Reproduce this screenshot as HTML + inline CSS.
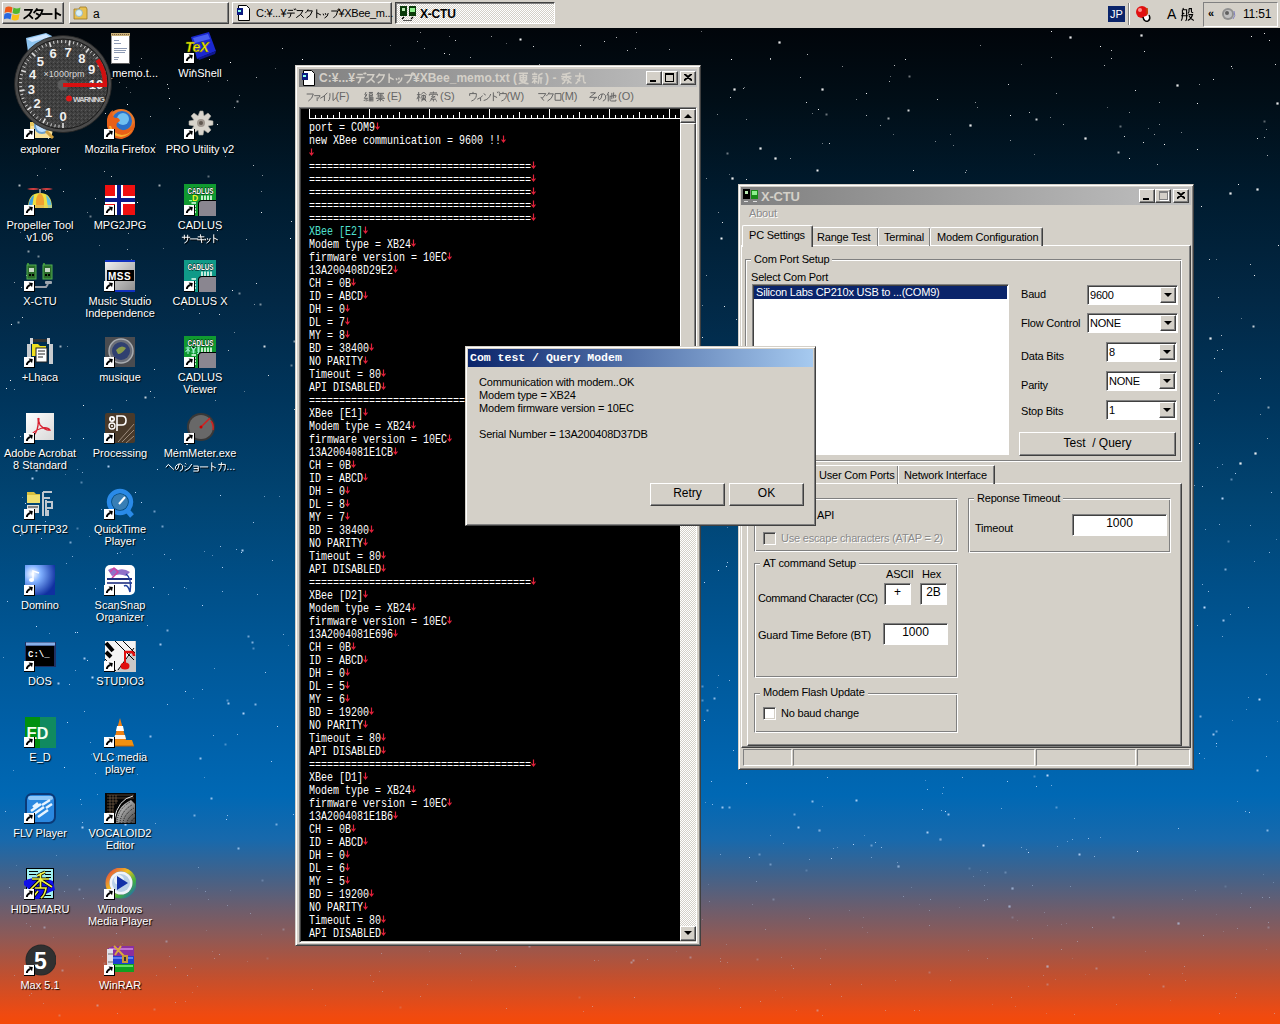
<!DOCTYPE html>
<html><head><meta charset="utf-8">
<style>
*{box-sizing:border-box;margin:0;padding:0}
html,body{width:1280px;height:1024px;overflow:hidden}
body{position:relative;font-family:"Liberation Sans",sans-serif;font-size:12px;color:#000;
background:linear-gradient(to bottom,#d4d0c8 0px,#d4d0c8 28px,#01050a 28px,#010e17 100px,#001c30 200px,#022845 300px,#00355c 400px,#014472 500px,#004f88 585px,#005898 655px,#0060a8 730px,#0068b4 795px,#1869ac 840px,#42628a 875px,#685e70 905px,#8c5a58 935px,#c05030 975px,#f04a10 1015px,#f44a08 1024px)}
.a{position:absolute}
/* window frame */
.win{position:absolute;background:#d4d0c8;border:1px solid;border-color:#d4d0c8 #404040 #404040 #d4d0c8}
.win>.in{position:absolute;left:0;top:0;right:0;bottom:0;border:1px solid;border-color:#fff #808080 #808080 #fff}
.tb{position:absolute;height:18px;color:#d4d0c8;font-weight:bold;font-size:12px;line-height:18px;white-space:nowrap;overflow:hidden}
.tb.inact{background:linear-gradient(to right,#808080,#c0c0c0)}
.tb.act{background:linear-gradient(to right,#0a246a,#a6caf0);color:#fff}
.cap{position:absolute;width:16px;height:14px;background:#d4d0c8;border:1px solid;border-color:#fff #404040 #404040 #fff;box-shadow:inset -1px -1px #808080}
.btn{position:absolute;background:#d4d0c8;border:1px solid;border-color:#fff #404040 #404040 #fff;box-shadow:inset -1px -1px #808080;text-align:center}
.sunk{position:absolute;background:#fff;border:1px solid;border-color:#808080 #fff #fff #808080;box-shadow:inset 1px 1px #404040}
.grp{position:absolute;border:1px solid;border-color:#808080 #fff #fff #808080;box-shadow:inset 1px 1px #fff,1px 1px #808080 inset}
.lbl{position:absolute;white-space:nowrap;font-size:11px;line-height:13px;letter-spacing:-.2px}
.ed{position:absolute;left:309px;font-family:"Liberation Mono",monospace;font-size:13px;line-height:13px;color:#fff;white-space:pre;transform-origin:0 0;transform:scaleX(0.7692)}
.dl{position:absolute;width:80px;text-align:center;color:#fff;font-size:11px;line-height:13px;white-space:nowrap;text-shadow:1px 1px 1px #000}
.r{color:#e02020}
.c{color:#50e0d0}
</style></head><body>


<!-- STARS -->
<div class="a" style="left:0;top:0;width:1px;height:1px;box-shadow:779px 42px 0 .6px rgba(255,255,255,.9),1070px 37px 0 .6px rgba(255,255,255,.9),1141px 35px 0 .6px rgba(255,255,255,.9),734px 89px 0 .6px rgba(255,255,255,.9),822px 89px 0 .6px rgba(255,255,255,.9),970px 125px 0 .6px rgba(255,255,255,.9),1085px 138px 0 .6px rgba(255,255,255,.9),1177px 85px 0 .6px rgba(255,255,255,.9),1277px 103px 0 .6px rgba(255,255,255,.9),775px 158px 0 .6px rgba(255,255,255,.9),732px 178px 0 .6px rgba(255,255,255,.9),760px 148px 0 .6px rgba(255,255,255,.9),1257px 189px 0 .6px rgba(255,255,255,.9),1230px 193px 0 .6px rgba(255,255,255,.9),1210px 338px 0 .6px rgba(255,255,255,.9),1255px 453px 0 .6px rgba(255,255,255,.9),1240px 463px 0 .6px rgba(255,255,255,.9),898px 866px 0 .6px rgba(190,215,250,.6),940px 839px 0 .6px rgba(190,215,250,.6),1012px 888px 0 .6px rgba(190,215,250,.6),1009px 906px 0 .6px rgba(190,215,250,.6),1178px 923px 0 .6px rgba(190,215,250,.6),1047px 966px 0 .6px rgba(190,215,250,.6),819px 830px 0 .6px rgba(190,215,250,.6),717px 476px 0 0 rgba(195,222,255,0.95),752px 530px 0 0 rgba(195,222,255,0.47),1015px 650px 0 0 rgba(195,222,255,0.41),1036px 119px 0 .5px rgba(255,255,255,0.80),1235px 997px 0 0 rgba(195,222,255,0.35),19px 185px 0 .5px rgba(255,255,255,0.69),310px 217px 0 0 rgba(255,255,255,0.37),1078px 464px 0 0 rgba(195,222,255,0.69),848px 522px 0 0 rgba(195,222,255,0.65),1274px 1013px 0 0 rgba(195,222,255,0.40),294px 341px 0 .5px rgba(255,255,255,0.54),513px 785px 0 0 rgba(195,222,255,0.90),1085px 974px 0 0 rgba(195,222,255,0.15),602px 927px 0 0 rgba(195,222,255,0.44),806px 102px 0 0 rgba(255,255,255,0.86),426px 116px 0 0 rgba(255,255,255,0.98),315px 146px 0 .5px rgba(255,255,255,0.42),227px 815px 0 0 rgba(195,222,255,0.71),937px 218px 0 0 rgba(255,255,255,0.44),539px 145px 0 0 rgba(255,255,255,0.49),1028px 986px 0 0 rgba(195,222,255,0.24),505px 238px 0 0 rgba(255,255,255,0.91),1266px 129px 0 0 rgba(255,255,255,0.49),421px 791px 0 .5px rgba(195,222,255,0.54),746px 119px 0 0 rgba(255,255,255,0.51),580px 396px 0 0 rgba(255,255,255,0.97),1109px 596px 0 .5px rgba(195,222,255,0.47),1047px 925px 0 0 rgba(195,222,255,0.22),1204px 758px 0 0 rgba(195,222,255,0.48),773px 899px 0 .5px rgba(195,222,255,0.28),1232px 68px 0 0 rgba(255,255,255,0.50),1054px 283px 0 0 rgba(255,255,255,0.74),922px 203px 0 0 rgba(255,255,255,0.39),1091px 581px 0 0 rgba(195,222,255,0.75),261px 934px 0 0 rgba(195,222,255,0.15),77px 469px 0 0 rgba(195,222,255,0.46),168px 594px 0 0 rgba(195,222,255,0.59),841px 996px 0 0 rgba(195,222,255,0.36),45px 168px 0 0 rgba(255,255,255,0.36),1232px 720px 0 0 rgba(195,222,255,0.36),935px 505px 0 0 rgba(195,222,255,0.56),699px 104px 0 0 rgba(255,255,255,0.83),901px 756px 0 0 rgba(195,222,255,0.87),877px 377px 0 0 rgba(255,255,255,0.94),1012px 441px 0 0 rgba(255,255,255,0.91),489px 646px 0 0 rgba(195,222,255,0.73),818px 109px 0 0 rgba(255,255,255,1.00),497px 747px 0 0 rgba(195,222,255,0.83),1073px 464px 0 0 rgba(195,222,255,0.40),770px 59px 0 0 rgba(255,255,255,0.66),636px 718px 0 0 rgba(195,222,255,0.75),14px 282px 0 0 rgba(255,255,255,0.55),217px 230px 0 0 rgba(255,255,255,0.94),1141px 465px 0 0 rgba(195,222,255,0.56),552px 226px 0 0 rgba(255,255,255,0.87),492px 897px 0 0 rgba(195,222,255,0.32),635px 164px 0 0 rgba(255,255,255,0.89),1216px 731px 0 .5px rgba(195,222,255,0.53),352px 474px 0 0 rgba(195,222,255,0.49),632px 646px 0 0 rgba(195,222,255,0.55),579px 997px 0 .5px rgba(195,222,255,0.17),53px 890px 0 0 rgba(195,222,255,0.36),1013px 334px 0 0 rgba(255,255,255,0.36),32px 478px 0 .5px rgba(195,222,255,0.89),60px 169px 0 0 rgba(255,255,255,0.76),838px 651px 0 0 rgba(195,222,255,0.87),255px 704px 0 .5px rgba(195,222,255,0.66),604px 41px 0 0 rgba(255,255,255,0.81),443px 298px 0 0 rgba(255,255,255,0.80),968px 635px 0 0 rgba(195,222,255,0.61),112px 923px 0 0 rgba(195,222,255,0.43),581px 158px 0 0 rgba(255,255,255,0.76),728px 401px 0 0 rgba(255,255,255,0.92),594px 960px 0 0 rgba(195,222,255,0.35),1047px 741px 0 0 rgba(195,222,255,0.77),1152px 240px 0 0 rgba(255,255,255,0.99),1012px 559px 0 0 rgba(195,222,255,0.56),446px 873px 0 0 rgba(195,222,255,0.17),983px 572px 0 .5px rgba(195,222,255,0.67),82px 827px 0 .5px rgba(195,222,255,0.87),1009px 360px 0 0 rgba(255,255,255,0.44),926px 539px 0 0 rgba(195,222,255,0.90),631px 962px 0 .5px rgba(195,222,255,0.43),674px 248px 0 0 rgba(255,255,255,0.54),669px 659px 0 0 rgba(195,222,255,0.90),488px 337px 0 0 rgba(255,255,255,0.90),1089px 235px 0 0 rgba(255,255,255,0.98),257px 594px 0 0 rgba(195,222,255,0.70),36px 626px 0 0 rgba(195,222,255,0.98),1025px 425px 0 0 rgba(255,255,255,0.72),84px 711px 0 0 rgba(195,222,255,0.70),1182px 973px 0 0 rgba(195,222,255,0.23),555px 155px 0 0 rgba(255,255,255,0.88),406px 499px 0 0 rgba(195,222,255,0.47),166px 941px 0 .5px rgba(195,222,255,0.38),291px 221px 0 0 rgba(255,255,255,0.80),793px 380px 0 0 rgba(255,255,255,0.42),653px 151px 0 0 rgba(255,255,255,0.51),559px 552px 0 0 rgba(195,222,255,0.59),204px 551px 0 0 rgba(195,222,255,0.48),678px 659px 0 0 rgba(195,222,255,0.90),298px 874px 0 0 rgba(195,222,255,0.37),404px 919px 0 0 rgba(195,222,255,0.24),1278px 245px 0 0 rgba(255,255,255,0.93),930px 266px 0 .5px rgba(255,255,255,0.52),540px 850px 0 .5px rgba(195,222,255,0.86),877px 427px 0 0 rgba(255,255,255,0.36),1167px 702px 0 .5px rgba(195,222,255,0.98),970px 528px 0 0 rgba(195,222,255,0.68),90px 216px 0 .5px rgba(255,255,255,0.42),659px 573px 0 .5px rgba(195,222,255,0.72),261px 212px 0 0 rgba(255,255,255,0.90),122px 943px 0 0 rgba(195,222,255,0.17),979px 485px 0 0 rgba(195,222,255,0.56),551px 538px 0 .5px rgba(195,222,255,0.74),1081px 721px 0 0 rgba(195,222,255,0.47),519px 758px 0 .5px rgba(195,222,255,0.48),20px 535px 0 0 rgba(195,222,255,0.93),1102px 724px 0 0 rgba(195,222,255,0.76),645px 621px 0 0 rgba(195,222,255,0.99),1166px 284px 0 0 rgba(255,255,255,0.83),519px 832px 0 0 rgba(195,222,255,0.93),982px 714px 0 0 rgba(195,222,255,0.85),90px 742px 0 0 rgba(195,222,255,0.57),455px 40px 0 0 rgba(255,255,255,0.77),1209px 259px 0 0 rgba(255,255,255,0.78),729px 680px 0 0 rgba(195,222,255,0.70),822px 1015px 0 0 rgba(195,222,255,0.36),29px 995px 0 0 rgba(195,222,255,0.33),514px 283px 0 0 rgba(255,255,255,0.38),126px 400px 0 0 rgba(255,255,255,0.51),650px 572px 0 0 rgba(195,222,255,0.98),817px 1010px 0 .5px rgba(195,222,255,0.39),972px 619px 0 0 rgba(195,222,255,0.38),604px 188px 0 0 rgba(255,255,255,0.46),75px 632px 0 0 rgba(195,222,255,0.96),765px 549px 0 0 rgba(195,222,255,0.59),718px 675px 0 0 rgba(195,222,255,0.53),18px 322px 0 .5px rgba(255,255,255,0.51),966px 184px 0 0 rgba(255,255,255,0.60),64px 767px 0 0 rgba(195,222,255,0.99),1159px 102px 0 0 rgba(255,255,255,0.63),312px 989px 0 0 rgba(195,222,255,0.31),599px 742px 0 0 rgba(195,222,255,0.99),147px 625px 0 0 rgba(195,222,255,0.76),67px 231px 0 0 rgba(255,255,255,0.69),855px 466px 0 0 rgba(195,222,255,0.65),537px 604px 0 0 rgba(195,222,255,0.86),1219px 1013px 0 0 rgba(195,222,255,0.37),1143px 142px 0 0 rgba(255,255,255,0.86),348px 384px 0 0 rgba(255,255,255,0.80),810px 613px 0 .5px rgba(195,222,255,0.84),1254px 275px 0 0 rgba(255,255,255,0.95),78px 69px 0 0 rgba(255,255,255,0.53),131px 644px 0 .5px rgba(195,222,255,0.70),866px 115px 0 0 rgba(255,255,255,0.71),613px 398px 0 0 rgba(255,255,255,0.49),1073px 764px 0 .5px rgba(195,222,255,0.40),798px 827px 0 .5px rgba(195,222,255,0.85),330px 448px 0 0 rgba(255,255,255,0.88),1266px 674px 0 0 rgba(195,222,255,0.56),1179px 765px 0 0 rgba(195,222,255,0.63),1120px 126px 0 .5px rgba(255,255,255,0.40),621px 586px 0 0 rgba(195,222,255,0.80),97px 794px 0 0 rgba(195,222,255,0.49),389px 110px 0 0 rgba(255,255,255,0.82),183px 309px 0 0 rgba(255,255,255,0.58),150px 391px 0 0 rgba(255,255,255,0.81),1203px 935px 0 0 rgba(195,222,255,0.42),390px 821px 0 0 rgba(195,222,255,0.56),1145px 951px 0 0 rgba(195,222,255,0.22),465px 390px 0 0 rgba(255,255,255,0.61),722px 222px 0 0 rgba(255,255,255,0.87),720px 854px 0 0 rgba(195,222,255,0.46),360px 898px 0 0 rgba(195,222,255,0.16),726px 566px 0 0 rgba(195,222,255,0.98),82px 822px 0 0 rgba(195,222,255,0.71),105px 113px 0 0 rgba(255,255,255,0.83),812px 113px 0 0 rgba(255,255,255,0.44),314px 669px 0 0 rgba(195,222,255,0.49),979px 544px 0 0 rgba(195,222,255,0.61),861px 984px 0 0 rgba(195,222,255,0.30),906px 740px 0 0 rgba(195,222,255,0.94),853px 844px 0 0 rgba(195,222,255,0.90),1137px 851px 0 0 rgba(195,222,255,0.97),909px 546px 0 0 rgba(195,222,255,0.87),187px 444px 0 0 rgba(255,255,255,0.83),215px 400px 0 0 rgba(255,255,255,0.48),1241px 318px 0 0 rgba(255,255,255,0.39),829px 143px 0 0 rgba(255,255,255,0.85),587px 91px 0 0 rgba(255,255,255,0.73),139px 66px 0 0 rgba(255,255,255,0.47),918px 262px 0 0 rgba(255,255,255,0.74),360px 212px 0 0 rgba(255,255,255,0.46),702px 337px 0 0 rgba(255,255,255,0.88),1136px 287px 0 0 rgba(255,255,255,0.94),1225px 569px 0 .5px rgba(195,222,255,0.66),1213px 79px 0 0 rgba(255,255,255,0.87),660px 550px 0 0 rgba(195,222,255,0.53),304px 678px 0 0 rgba(195,222,255,0.36),1020px 396px 0 0 rgba(255,255,255,0.81),201px 185px 0 0 rgba(255,255,255,0.56),661px 886px 0 0 rgba(195,222,255,0.34),684px 293px 0 0 rgba(255,255,255,0.45),1051px 31px 0 0 rgba(255,255,255,0.90),345px 111px 0 .5px rgba(255,255,255,0.82),600px 503px 0 0 rgba(195,222,255,0.97),389px 874px 0 0 rgba(195,222,255,0.39),116px 933px 0 0 rgba(195,222,255,0.40),673px 565px 0 0 rgba(195,222,255,0.45),398px 337px 0 0 rgba(255,255,255,0.40),915px 490px 0 0 rgba(195,222,255,0.58),505px 134px 0 0 rgba(255,255,255,0.65),837px 847px 0 0 rgba(195,222,255,0.36),304px 729px 0 0 rgba(195,222,255,0.72),1269px 40px 0 0 rgba(255,255,255,0.87),372px 637px 0 0 rgba(195,222,255,0.59),432px 324px 0 0 rgba(255,255,255,0.60),256px 283px 0 0 rgba(255,255,255,0.83),720px 961px 0 0 rgba(195,222,255,0.37),118px 844px 0 .5px rgba(195,222,255,0.44),907px 698px 0 0 rgba(195,222,255,0.47),759px 854px 0 .5px rgba(195,222,255,0.41),159px 185px 0 .5px rgba(255,255,255,0.61),547px 937px 0 0 rgba(195,222,255,0.30),1051px 785px 0 0 rgba(195,222,255,0.60),20px 436px 0 0 rgba(255,255,255,0.61),1011px 997px 0 0 rgba(195,222,255,0.35),424px 48px 0 0 rgba(255,255,255,0.57),483px 135px 0 0 rgba(255,255,255,0.68),783px 843px 0 0 rgba(195,222,255,0.45),702px 919px 0 0 rgba(195,222,255,0.26),913px 170px 0 0 rgba(255,255,255,0.99),1069px 735px 0 0 rgba(195,222,255,0.48),253px 648px 0 .5px rgba(195,222,255,0.40),892px 598px 0 0 rgba(195,222,255,0.56),593px 386px 0 0 rgba(255,255,255,0.43),1157px 164px 0 0 rgba(255,255,255,0.70),338px 582px 0 0 rgba(195,222,255,0.94),770px 835px 0 0 rgba(195,222,255,0.43),1148px 314px 0 0 rgba(255,255,255,0.51),238px 848px 0 .5px rgba(195,222,255,0.71),230px 62px 0 0 rgba(255,255,255,0.99),394px 678px 0 0 rgba(195,222,255,0.79),758px 406px 0 .5px rgba(255,255,255,0.87),599px 227px 0 0 rgba(255,255,255,0.44),222px 591px 0 0 rgba(195,222,255,0.69),425px 590px 0 .5px rgba(195,222,255,0.77),185px 691px 0 0 rgba(195,222,255,0.97),527px 493px 0 0 rgba(195,222,255,0.76),962px 777px 0 0 rgba(195,222,255,0.67),1094px 856px 0 0 rgba(195,222,255,0.62),1159px 587px 0 0 rgba(195,222,255,0.69),1157px 456px 0 .5px rgba(195,222,255,0.56),1152px 745px 0 0 rgba(195,222,255,0.83),390px 771px 0 .5px rgba(195,222,255,0.74),572px 153px 0 0 rgba(255,255,255,0.68),889px 81px 0 0 rgba(255,255,255,0.69),506px 332px 0 .5px rgba(255,255,255,0.50),1237px 928px 0 0 rgba(195,222,255,0.35),1031px 445px 0 0 rgba(255,255,255,0.49),1156px 588px 0 0 rgba(195,222,255,0.41),688px 152px 0 .5px rgba(255,255,255,0.97),383px 270px 0 .5px rgba(255,255,255,0.56),1044px 912px 0 0 rgba(195,222,255,0.27),59px 607px 0 0 rgba(195,222,255,0.37),638px 333px 0 0 rgba(255,255,255,0.96),264px 496px 0 0 rgba(195,222,255,0.54),250px 913px 0 0 rgba(195,222,255,0.40),220px 495px 0 0 rgba(195,222,255,0.92),809px 229px 0 0 rgba(255,255,255,0.47),136px 79px 0 0 rgba(255,255,255,0.82),1113px 917px 0 .5px rgba(195,222,255,0.36),1200px 716px 0 .5px rgba(195,222,255,0.64),393px 250px 0 0 rgba(255,255,255,0.81),301px 208px 0 0 rgba(255,255,255,0.78),847px 397px 0 0 rgba(255,255,255,0.92),385px 256px 0 0 rgba(255,255,255,0.95),819px 303px 0 0 rgba(255,255,255,0.41),676px 464px 0 .5px rgba(195,222,255,0.70),364px 621px 0 0 rgba(195,222,255,0.51),365px 116px 0 0 rgba(255,255,255,0.84),702px 305px 0 0 rgba(255,255,255,0.47),43px 1003px 0 0 rgba(195,222,255,0.29),1189px 409px 0 0 rgba(255,255,255,0.67),826px 578px 0 0 rgba(195,222,255,0.58),661px 801px 0 0 rgba(195,222,255,0.68),666px 704px 0 .5px rgba(195,222,255,0.97),211px 798px 0 .5px rgba(195,222,255,0.75),989px 464px 0 0 rgba(195,222,255,0.86),626px 262px 0 0 rgba(255,255,255,0.49),45px 521px 0 0 rgba(195,222,255,0.74),1117px 594px 0 .5px rgba(195,222,255,0.47),635px 48px 0 0 rgba(255,255,255,0.63),1022px 289px 0 0 rgba(255,255,255,0.40),695px 590px 0 .5px rgba(195,222,255,0.86),398px 174px 0 0 rgba(255,255,255,0.38),673px 642px 0 0 rgba(195,222,255,0.52),1050px 117px 0 0 rgba(255,255,255,0.46),884px 187px 0 0 rgba(255,255,255,0.89),526px 90px 0 0 rgba(255,255,255,0.59),54px 986px 0 0 rgba(195,222,255,0.30),185px 1001px 0 0 rgba(195,222,255,0.29),308px 69px 0 0 rgba(255,255,255,0.93),382px 417px 0 .5px rgba(255,255,255,0.63),1275px 64px 0 0 rgba(255,255,255,0.85),324px 256px 0 0 rgba(255,255,255,0.71),1194px 485px 0 0 rgba(195,222,255,0.59),782px 997px 0 0 rgba(195,222,255,0.16),75px 670px 0 0 rgba(195,222,255,0.57),756px 881px 0 0 rgba(195,222,255,0.42),1079px 417px 0 0 rgba(255,255,255,0.60),445px 242px 0 0 rgba(255,255,255,0.47),261px 191px 0 0 rgba(255,255,255,0.49),572px 334px 0 0 rgba(255,255,255,1.00),262px 880px 0 .5px rgba(195,222,255,0.26),464px 711px 0 .5px rgba(195,222,255,0.53),336px 209px 0 0 rgba(255,255,255,0.61),344px 734px 0 .5px rgba(195,222,255,0.58),460px 953px 0 0 rgba(195,222,255,0.38),26px 923px 0 0 rgba(195,222,255,0.25),1129px 112px 0 0 rgba(255,255,255,0.56),70px 542px 0 .5px rgba(195,222,255,0.61),193px 70px 0 .5px rgba(255,255,255,0.74),543px 338px 0 0 rgba(255,255,255,0.70),333px 726px 0 0 rgba(195,222,255,0.82),262px 175px 0 0 rgba(255,255,255,0.53),495px 429px 0 0 rgba(255,255,255,0.91),442px 318px 0 .5px rgba(255,255,255,0.49),807px 54px 0 0 rgba(255,255,255,0.72),382px 991px 0 0 rgba(195,222,255,0.35),882px 243px 0 0 rgba(255,255,255,0.78),300px 885px 0 .5px rgba(195,222,255,0.34),502px 451px 0 0 rgba(195,222,255,0.39),636px 353px 0 0 rgba(255,255,255,0.53),608px 426px 0 0 rgba(255,255,255,0.46),119px 266px 0 0 rgba(255,255,255,0.57),746px 179px 0 0 rgba(255,255,255,0.81),29px 720px 0 0 rgba(195,222,255,0.60),518px 92px 0 0 rgba(255,255,255,0.39),600px 607px 0 0 rgba(195,222,255,0.56),444px 53px 0 0 rgba(255,255,255,0.93),855px 288px 0 0 rgba(255,255,255,0.47),1222px 636px 0 0 rgba(195,222,255,0.59),987px 958px 0 0 rgba(195,222,255,0.34),532px 435px 0 0 rgba(255,255,255,0.53),489px 897px 0 .5px rgba(195,222,255,0.42),649px 164px 0 0 rgba(255,255,255,0.55),192px 992px 0 0 rgba(195,222,255,0.21),300px 700px 0 0 rgba(195,222,255,0.35),306px 418px 0 0 rgba(255,255,255,0.67),799px 570px 0 0 rgba(195,222,255,0.71),427px 984px 0 0 rgba(195,222,255,0.25),916px 339px 0 0 rgba(255,255,255,0.80),1055px 979px 0 0 rgba(195,222,255,0.20),722px 513px 0 0 rgba(195,222,255,0.59),684px 768px 0 .5px rgba(195,222,255,0.50),228px 350px 0 0 rgba(255,255,255,0.68),88px 92px 0 0 rgba(255,255,255,0.42),578px 141px 0 0 rgba(255,255,255,0.85),1109px 190px 0 .5px rgba(255,255,255,0.92),650px 280px 0 0 rgba(255,255,255,0.87),322px 735px 0 0 rgba(195,222,255,0.82),972px 359px 0 0 rgba(255,255,255,0.90),538px 589px 0 0 rgba(195,222,255,0.81),1026px 849px 0 0 rgba(195,222,255,0.43),296px 689px 0 .5px rgba(195,222,255,0.47),1204px 607px 0 .5px rgba(195,222,255,0.98),537px 707px 0 0 rgba(195,222,255,0.76),1266px 949px 0 0 rgba(195,222,255,0.16),54px 147px 0 0 rgba(255,255,255,0.54),154px 1009px 0 .5px rgba(195,222,255,0.25),618px 564px 0 0 rgba(195,222,255,0.59),1074px 818px 0 0 rgba(195,222,255,0.53),980px 638px 0 0 rgba(195,222,255,0.99),699px 714px 0 .5px rgba(195,222,255,0.87),137px 202px 0 0 rgba(255,255,255,0.96),154px 511px 0 .5px rgba(195,222,255,0.56),184px 587px 0 0 rgba(195,222,255,0.76),617px 254px 0 0 rgba(255,255,255,0.59),82px 80px 0 0 rgba(255,255,255,0.93),234px 107px 0 0 rgba(255,255,255,0.66),1110px 229px 0 0 rgba(255,255,255,0.66),507px 825px 0 0 rgba(195,222,255,0.39),797px 677px 0 0 rgba(195,222,255,0.53),1273px 882px 0 0 rgba(195,222,255,0.28),225px 744px 0 .5px rgba(195,222,255,0.37),96px 147px 0 0 rgba(255,255,255,0.58),658px 335px 0 0 rgba(255,255,255,0.36),14px 975px 0 0 rgba(195,222,255,0.31),941px 810px 0 0 rgba(195,222,255,0.61),983px 845px 0 .5px rgba(195,222,255,0.99),515px 966px 0 0 rgba(195,222,255,0.36),30px 926px 0 0 rgba(195,222,255,0.32),473px 413px 0 0 rgba(255,255,255,0.78),817px 389px 0 0 rgba(255,255,255,0.58),412px 922px 0 0 rgba(195,222,255,0.18),271px 761px 0 0 rgba(195,222,255,0.83),227px 700px 0 .5px rgba(195,222,255,0.42),551px 375px 0 0 rgba(255,255,255,0.36),412px 427px 0 0 rgba(255,255,255,0.70),1127px 232px 0 0 rgba(255,255,255,0.56),1264px 137px 0 0 rgba(255,255,255,0.63),523px 246px 0 0 rgba(255,255,255,0.81),867px 299px 0 0 rgba(255,255,255,0.97),457px 211px 0 0 rgba(255,255,255,0.99),484px 655px 0 .5px rgba(195,222,255,0.77),1136px 637px 0 0 rgba(195,222,255,0.91),727px 527px 0 0 rgba(195,222,255,0.42),580px 709px 0 0 rgba(195,222,255,0.78),294px 409px 0 0 rgba(255,255,255,0.74),41px 538px 0 0 rgba(195,222,255,0.76),761px 614px 0 .5px rgba(195,222,255,0.96),1271px 492px 0 0 rgba(195,222,255,0.83),1266px 756px 0 0 rgba(195,222,255,0.61),1267px 155px 0 0 rgba(255,255,255,0.67),831px 858px 0 0 rgba(195,222,255,0.96),655px 816px 0 .5px rgba(195,222,255,1.00),911px 887px 0 0 rgba(195,222,255,0.23),686px 477px 0 .5px rgba(195,222,255,0.91),824px 305px 0 0 rgba(255,255,255,0.40),628px 805px 0 0 rgba(195,222,255,0.51),987px 872px 0 0 rgba(195,222,255,0.31),194px 815px 0 .5px rgba(195,222,255,0.59),443px 66px 0 0 rgba(255,255,255,0.91),233px 146px 0 0 rgba(255,255,255,0.60),1154px 638px 0 0 rgba(195,222,255,0.40),805px 234px 0 0 rgba(255,255,255,0.92),856px 224px 0 .5px rgba(255,255,255,0.63),404px 364px 0 0 rgba(255,255,255,0.76),889px 624px 0 .5px rgba(195,222,255,0.47),597px 713px 0 .5px rgba(195,222,255,0.43),781px 957px 0 0 rgba(195,222,255,0.26),885px 1010px 0 0 rgba(195,222,255,0.37),523px 336px 0 0 rgba(255,255,255,0.45),1050px 448px 0 0 rgba(255,255,255,0.62),1205px 529px 0 0 rgba(195,222,255,0.58),741px 262px 0 0 rgba(255,255,255,0.54),1094px 312px 0 0 rgba(255,255,255,0.79),496px 950px 0 0 rgba(195,222,255,0.37),82px 472px 0 0 rgba(195,222,255,0.62),1222px 464px 0 0 rgba(195,222,255,0.54),313px 692px 0 .5px rgba(195,222,255,0.62),322px 912px 0 0 rgba(195,222,255,0.28),1088px 838px 0 0 rgba(195,222,255,0.73),1148px 128px 0 0 rgba(255,255,255,0.41),926px 399px 0 0 rgba(255,255,255,0.78),1216px 914px 0 0 rgba(195,222,255,0.16),463px 492px 0 0 rgba(195,222,255,0.65),775px 691px 0 0 rgba(195,222,255,0.98),506px 1008px 0 0 rgba(195,222,255,0.40),1277px 721px 0 0 rgba(195,222,255,0.39),840px 425px 0 0 rgba(255,255,255,0.49),473px 236px 0 0 rgba(255,255,255,0.44),107px 761px 0 0 rgba(195,222,255,0.46),950px 644px 0 0 rgba(195,222,255,0.51),993px 750px 0 0 rgba(195,222,255,0.43),1100px 46px 0 0 rgba(255,255,255,0.96),449px 54px 0 0 rgba(255,255,255,0.70),1010px 140px 0 0 rgba(255,255,255,0.55),727px 153px 0 .5px rgba(255,255,255,0.43),376px 535px 0 .5px rgba(195,222,255,0.86),70px 438px 0 0 rgba(255,255,255,0.49),588px 580px 0 .5px rgba(195,222,255,0.90),198px 867px 0 0 rgba(195,222,255,0.44),784px 430px 0 0 rgba(255,255,255,0.91),14px 437px 0 0 rgba(255,255,255,0.45),912px 753px 0 0 rgba(195,222,255,0.45),141px 58px 0 0 rgba(255,255,255,0.55),1085px 663px 0 0 rgba(195,222,255,0.38),334px 107px 0 0 rgba(255,255,255,0.42),626px 354px 0 0 rgba(255,255,255,0.78),727px 962px 0 0 rgba(195,222,255,0.30),383px 419px 0 0 rgba(255,255,255,0.83),549px 392px 0 0 rgba(255,255,255,0.66),577px 454px 0 0 rgba(195,222,255,0.38),676px 91px 0 0 rgba(255,255,255,0.71),127px 249px 0 0 rgba(255,255,255,0.59),295px 507px 0 0 rgba(195,222,255,0.84),520px 39px 0 .5px rgba(255,255,255,0.98),1230px 614px 0 0 rgba(195,222,255,0.59),386px 393px 0 0 rgba(255,255,255,0.75),637px 340px 0 0 rgba(255,255,255,0.69),119px 82px 0 0 rgba(255,255,255,0.51),545px 814px 0 0 rgba(195,222,255,0.91),870px 311px 0 0 rgba(255,255,255,0.41),420px 849px 0 0 rgba(195,222,255,0.56),822px 806px 0 0 rgba(195,222,255,0.39),800px 77px 0 0 rgba(255,255,255,0.71),29px 659px 0 0 rgba(195,222,255,0.96),7px 601px 0 0 rgba(195,222,255,0.83),1259px 699px 0 .5px rgba(195,222,255,0.95),564px 800px 0 0 rgba(195,222,255,0.84),559px 471px 0 0 rgba(195,222,255,0.43),91px 754px 0 0 rgba(195,222,255,0.43),702px 686px 0 .5px rgba(195,222,255,0.42),1221px 335px 0 0 rgba(255,255,255,0.71),531px 238px 0 0 rgba(255,255,255,0.70),1118px 152px 0 .5px rgba(255,255,255,0.66),483px 455px 0 0 rgba(195,222,255,0.79),883px 516px 0 0 rgba(195,222,255,0.60),950px 134px 0 0 rgba(255,255,255,0.46),443px 229px 0 0 rgba(255,255,255,0.46),666px 613px 0 0 rgba(195,222,255,0.60),459px 860px 0 0 rgba(195,222,255,0.73),420px 996px 0 0 rgba(195,222,255,0.36),935px 287px 0 0 rgba(255,255,255,0.72),1056px 93px 0 0 rgba(255,255,255,0.60),791px 456px 0 0 rgba(195,222,255,0.71),583px 926px 0 0 rgba(195,222,255,0.30),131px 772px 0 0 rgba(195,222,255,0.55),894px 65px 0 0 rgba(255,255,255,0.72),194px 358px 0 0 rgba(255,255,255,0.97),125px 824px 0 .5px rgba(195,222,255,0.86),685px 226px 0 0 rgba(255,255,255,0.75),746px 783px 0 0 rgba(195,222,255,0.93),466px 709px 0 0 rgba(195,222,255,0.97),1098px 317px 0 0 rgba(255,255,255,0.82),26px 275px 0 0 rgba(255,255,255,0.70),324px 319px 0 0 rgba(255,255,255,0.44),365px 299px 0 0 rgba(255,255,255,0.53),205px 891px 0 0 rgba(195,222,255,0.41),696px 630px 0 0 rgba(195,222,255,0.83),1177px 680px 0 0 rgba(195,222,255,0.85),1199px 84px 0 0 rgba(255,255,255,0.59),580px 260px 0 0 rgba(255,255,255,0.59),647px 959px 0 0 rgba(195,222,255,0.32),1216px 259px 0 0 rgba(255,255,255,0.42),92px 677px 0 .5px rgba(195,222,255,0.94),153px 587px 0 0 rgba(195,222,255,0.99),79px 889px 0 .5px rgba(195,222,255,0.35),731px 59px 0 0 rgba(255,255,255,0.99),1005px 872px 0 .5px rgba(195,222,255,0.31),236px 549px 0 0 rgba(195,222,255,0.69),253px 522px 0 0 rgba(195,222,255,0.81),101px 509px 0 0 rgba(195,222,255,0.67),719px 988px 0 0 rgba(195,222,255,0.19),899px 361px 0 0 rgba(255,255,255,0.96),1184px 966px 0 0 rgba(195,222,255,0.41),627px 50px 0 0 rgba(255,255,255,0.73),785px 634px 0 .5px rgba(195,222,255,0.96),1228px 541px 0 .5px rgba(195,222,255,0.37),1225px 886px 0 .5px rgba(195,222,255,0.16),881px 847px 0 0 rgba(195,222,255,0.69),1034px 776px 0 .5px rgba(195,222,255,0.35),1249px 812px 0 0 rgba(195,222,255,0.89),444px 361px 0 0 rgba(255,255,255,0.36),750px 288px 0 0 rgba(255,255,255,0.69),582px 695px 0 0 rgba(195,222,255,0.50),192px 203px 0 0 rgba(255,255,255,0.51),426px 802px 0 0 rgba(195,222,255,0.50),669px 286px 0 0 rgba(255,255,255,0.52),297px 212px 0 0 rgba(255,255,255,0.55),863px 746px 0 0 rgba(195,222,255,0.86),977px 107px 0 0 rgba(255,255,255,0.51),1267px 438px 0 0 rgba(255,255,255,0.59),1268px 927px 0 .5px rgba(195,222,255,0.27),1001px 808px 0 0 rgba(195,222,255,0.57),367px 404px 0 0 rgba(255,255,255,0.74),1047px 499px 0 0 rgba(195,222,255,0.36),83px 405px 0 0 rgba(255,255,255,0.94),1124px 233px 0 0 rgba(255,255,255,0.97),1191px 367px 0 0 rgba(255,255,255,0.44),247px 961px 0 0 rgba(195,222,255,0.19),930px 899px 0 0 rgba(195,222,255,0.43),154px 397px 0 0 rgba(255,255,255,0.53),237px 101px 0 .5px rgba(255,255,255,0.58),234px 332px 0 0 rgba(255,255,255,0.43),727px 562px 0 0 rgba(195,222,255,0.85),104px 963px 0 .5px rgba(195,222,255,0.22),974px 335px 0 0 rgba(255,255,255,0.95),423px 188px 0 0 rgba(255,255,255,0.72),1245px 811px 0 0 rgba(195,222,255,0.65),595px 863px 0 0 rgba(195,222,255,0.21),31px 993px 0 0 rgba(195,222,255,0.38),208px 81px 0 0 rgba(255,255,255,0.46),25px 238px 0 0 rgba(255,255,255,0.49),836px 522px 0 .5px rgba(195,222,255,0.65),390px 45px 0 0 rgba(255,255,255,0.38),473px 639px 0 0 rgba(195,222,255,0.66),456px 342px 0 0 rgba(255,255,255,0.92),691px 441px 0 0 rgba(255,255,255,0.65),299px 930px 0 0 rgba(195,222,255,0.43),208px 899px 0 0 rgba(195,222,255,0.30),219px 314px 0 0 rgba(255,255,255,0.82),202px 605px 0 0 rgba(195,222,255,0.97),880px 125px 0 0 rgba(255,255,255,0.58),1181px 520px 0 0 rgba(195,222,255,0.68),636px 32px 0 0 rgba(255,255,255,0.52),592px 652px 0 0 rgba(195,222,255,0.41),821px 505px 0 0 rgba(195,222,255,0.98),108px 466px 0 .5px rgba(195,222,255,0.87),1021px 847px 0 0 rgba(195,222,255,0.52),546px 526px 0 0 rgba(195,222,255,0.71),617px 513px 0 0 rgba(195,222,255,0.54),438px 525px 0 .5px rgba(195,222,255,0.48),1028px 852px 0 0 rgba(195,222,255,0.99),1021px 705px 0 0 rgba(195,222,255,0.81),226px 819px 0 0 rgba(195,222,255,0.88),1177px 270px 0 0 rgba(255,255,255,0.36),1013px 368px 0 0 rgba(255,255,255,0.75),825px 949px 0 0 rgba(195,222,255,0.17),1257px 138px 0 0 rgba(255,255,255,0.92),889px 213px 0 0 rgba(255,255,255,0.84),160px 644px 0 .5px rgba(195,222,255,0.82),984px 885px 0 0 rgba(195,222,255,0.39),1208px 591px 0 0 rgba(195,222,255,0.77),452px 409px 0 0 rgba(255,255,255,0.36),293px 814px 0 0 rgba(195,222,255,0.77),660px 714px 0 0 rgba(195,222,255,0.56),829px 215px 0 0 rgba(255,255,255,0.80),1187px 356px 0 0 rgba(255,255,255,0.94),793px 968px 0 0 rgba(195,222,255,0.44),358px 358px 0 0 rgba(255,255,255,0.69),1104px 65px 0 0 rgba(255,255,255,0.70),320px 763px 0 0 rgba(195,222,255,0.48),419px 268px 0 .5px rgba(255,255,255,0.40),674px 380px 0 0 rgba(255,255,255,0.97),521px 438px 0 0 rgba(255,255,255,0.50),156px 975px 0 0 rgba(195,222,255,0.28),711px 781px 0 0 rgba(195,222,255,0.77),322px 919px 0 0 rgba(195,222,255,0.31),242px 550px 0 .5px rgba(195,222,255,0.85),706px 178px 0 0 rgba(255,255,255,0.53),409px 746px 0 0 rgba(195,222,255,0.85),584px 725px 0 .5px rgba(195,222,255,0.63),1222px 498px 0 .5px rgba(195,222,255,0.93),345px 100px 0 0 rgba(255,255,255,0.80),545px 156px 0 0 rgba(255,255,255,0.72),832px 427px 0 0 rgba(255,255,255,0.79),909px 76px 0 .5px rgba(255,255,255,0.43),22px 497px 0 0 rgba(195,222,255,0.40),135px 492px 0 0 rgba(195,222,255,0.97),752px 509px 0 0 rgba(195,222,255,0.56),389px 148px 0 0 rgba(255,255,255,0.49),525px 531px 0 0 rgba(195,222,255,0.61),1013px 284px 0 0 rgba(255,255,255,0.81),559px 390px 0 0 rgba(255,255,255,0.64),526px 644px 0 0 rgba(195,222,255,0.55),606px 478px 0 0 rgba(195,222,255,0.92),1149px 400px 0 0 rgba(255,255,255,0.98),859px 425px 0 0 rgba(255,255,255,0.83),1216px 743px 0 0 rgba(195,222,255,0.78),836px 459px 0 0 rgba(195,222,255,0.50),1254px 561px 0 0 rgba(195,222,255,0.57),533px 46px 0 0 rgba(255,255,255,0.85),283px 634px 0 0 rgba(195,222,255,0.61),1168px 224px 0 0 rgba(255,255,255,0.39),1072px 839px 0 0 rgba(195,222,255,0.60),975px 731px 0 0 rgba(195,222,255,0.84),903px 278px 0 0 rgba(255,255,255,0.71),175px 1002px 0 0 rgba(195,222,255,0.38),1216px 746px 0 0 rgba(195,222,255,0.53),634px 550px 0 0 rgba(195,222,255,0.46),849px 910px 0 0 rgba(195,222,255,0.24),186px 444px 0 0 rgba(255,255,255,0.74),1269px 552px 0 0 rgba(195,222,255,0.72),971px 377px 0 0 rgba(255,255,255,0.40),883px 712px 0 0 rgba(195,222,255,0.89),459px 300px 0 .5px rgba(255,255,255,0.70),841px 399px 0 0 rgba(255,255,255,0.45),1195px 890px 0 0 rgba(195,222,255,0.22),110px 146px 0 0 rgba(255,255,255,0.87),626px 290px 0 .5px rgba(255,255,255,0.80),1100px 837px 0 0 rgba(195,222,255,0.49),431px 719px 0 .5px rgba(195,222,255,0.92),402px 497px 0 0 rgba(195,222,255,0.64),780px 591px 0 .5px rgba(195,222,255,0.99),793px 249px 0 0 rgba(255,255,255,0.45),563px 366px 0 0 rgba(255,255,255,0.63),867px 932px 0 0 rgba(195,222,255,0.20),277px 726px 0 0 rgba(195,222,255,0.92),466px 253px 0 0 rgba(255,255,255,0.50),890px 76px 0 0 rgba(255,255,255,0.39),746px 565px 0 .5px rgba(195,222,255,0.41),1260px 378px 0 0 rgba(255,255,255,0.74),130px 92px 0 0 rgba(255,255,255,0.36),349px 204px 0 0 rgba(255,255,255,0.78),598px 348px 0 0 rgba(255,255,255,0.54),461px 381px 0 0 rgba(255,255,255,0.51),21px 287px 0 0 rgba(255,255,255,0.55),145px 295px 0 0 rgba(255,255,255,0.90),399px 534px 0 0 rgba(195,222,255,0.93),844px 643px 0 0 rgba(195,222,255,0.80),499px 437px 0 0 rgba(255,255,255,0.68),682px 551px 0 0 rgba(195,222,255,0.86),28px 251px 0 .5px rgba(255,255,255,0.55),794px 814px 0 .5px rgba(195,222,255,0.54),1070px 886px 0 0 rgba(195,222,255,0.36),582px 763px 0 0 rgba(195,222,255,0.61),1269px 897px 0 0 rgba(195,222,255,0.43),316px 103px 0 0 rgba(255,255,255,0.98),397px 537px 0 0 rgba(195,222,255,0.91),97px 1005px 0 .5px rgba(195,222,255,0.45),499px 176px 0 0 rgba(255,255,255,0.77),1202px 584px 0 0 rgba(195,222,255,0.63),745px 613px 0 0 rgba(195,222,255,0.46),863px 917px 0 0 rgba(195,222,255,0.22),431px 565px 0 0 rgba(195,222,255,0.73),282px 48px 0 0 rgba(255,255,255,0.78),975px 102px 0 0 rgba(255,255,255,0.57),130px 580px 0 0 rgba(195,222,255,0.76),927px 832px 0 .5px rgba(195,222,255,0.84),1021px 64px 0 0 rgba(255,255,255,0.44),209px 59px 0 0 rgba(255,255,255,0.66),332px 346px 0 0 rgba(255,255,255,0.89),787px 656px 0 .5px rgba(195,222,255,0.96),490px 585px 0 0 rgba(195,222,255,0.89),237px 734px 0 0 rgba(195,222,255,0.67),357px 266px 0 0 rgba(255,255,255,0.95),239px 95px 0 0 rgba(255,255,255,0.50),897px 862px 0 0 rgba(195,222,255,0.44),490px 648px 0 0 rgba(195,222,255,0.82),630px 88px 0 0 rgba(255,255,255,0.60),36px 78px 0 0 rgba(255,255,255,0.99),190px 355px 0 0 rgba(255,255,255,0.74),640px 208px 0 0 rgba(255,255,255,0.67),306px 587px 0 0 rgba(195,222,255,0.47),1107px 107px 0 0 rgba(255,255,255,0.37),1080px 491px 0 0 rgba(195,222,255,0.75),925px 780px 0 0 rgba(195,222,255,0.38),208px 176px 0 .5px rgba(255,255,255,0.37),488px 894px 0 .5px rgba(195,222,255,0.18),770px 864px 0 .5px rgba(195,222,255,0.42),367px 141px 0 0 rgba(255,255,255,0.47),820px 228px 0 0 rgba(255,255,255,0.46),481px 557px 0 0 rgba(195,222,255,0.45),497px 530px 0 .5px rgba(195,222,255,0.66),248px 636px 0 .5px rgba(195,222,255,0.57),752px 904px 0 0 rgba(195,222,255,0.27),169px 956px 0 0 rgba(195,222,255,0.27),905px 397px 0 .5px rgba(255,255,255,0.94),375px 310px 0 0 rgba(255,255,255,0.84),1184px 719px 0 0 rgba(195,222,255,0.47),980px 870px 0 0 rgba(195,222,255,0.18),1108px 759px 0 0 rgba(195,222,255,0.59),1149px 974px 0 0 rgba(195,222,255,0.32),1074px 1014px 0 0 rgba(195,222,255,0.35),517px 172px 0 0 rgba(255,255,255,0.72),80px 799px 0 0 rgba(195,222,255,0.76),777px 348px 0 0 rgba(255,255,255,0.47),1263px 874px 0 0 rgba(195,222,255,0.23),243px 713px 0 .5px rgba(195,222,255,0.90),434px 578px 0 .5px rgba(195,222,255,0.35),420px 32px 0 0 rgba(255,255,255,0.53),84px 658px 0 .5px rgba(195,222,255,0.82),925px 504px 0 0 rgba(195,222,255,0.91),407px 445px 0 0 rgba(255,255,255,0.61),593px 761px 0 .5px rgba(195,222,255,0.80),1237px 801px 0 0 rgba(195,222,255,0.48),45px 190px 0 0 rgba(255,255,255,0.62),733px 750px 0 0 rgba(195,222,255,0.79),126px 87px 0 0 rgba(255,255,255,0.37),875px 842px 0 0 rgba(195,222,255,0.71),145px 397px 0 .5px rgba(255,255,255,0.77),38px 256px 0 .5px rgba(255,255,255,0.46),164px 554px 0 0 rgba(195,222,255,0.74),154px 369px 0 0 rgba(255,255,255,0.79),709px 901px 0 0 rgba(195,222,255,0.32),1248px 697px 0 0 rgba(195,222,255,0.54),600px 653px 0 0 rgba(195,222,255,0.36),770px 289px 0 0 rgba(255,255,255,0.68),168px 88px 0 0 rgba(255,255,255,0.74),1015px 1006px 0 0 rgba(195,222,255,0.24),1029px 528px 0 0 rgba(195,222,255,0.61),509px 507px 0 0 rgba(195,222,255,0.66),59px 1015px 0 .5px rgba(195,222,255,0.27),193px 698px 0 0 rgba(195,222,255,0.45),977px 623px 0 0 rgba(195,222,255,0.64),1137px 392px 0 .5px rgba(255,255,255,0.49),618px 903px 0 .5px rgba(195,222,255,0.19),959px 907px 0 0 rgba(195,222,255,0.17),571px 241px 0 .5px rgba(255,255,255,0.74),429px 951px 0 0 rgba(195,222,255,0.19),48px 138px 0 0 rgba(255,255,255,0.77),1012px 917px 0 .5px rgba(195,222,255,0.21),602px 624px 0 0 rgba(195,222,255,0.55),823px 235px 0 0 rgba(255,255,255,0.40),791px 965px 0 0 rgba(195,222,255,0.25),1017px 920px 0 0 rgba(195,222,255,0.16),699px 168px 0 0 rgba(255,255,255,0.97),706px 275px 0 0 rgba(255,255,255,0.56),972px 763px 0 0 rgba(195,222,255,0.57),931px 716px 0 .5px rgba(195,222,255,0.65),217px 124px 0 0 rgba(255,255,255,0.89),467px 665px 0 .5px rgba(195,222,255,0.59),775px 990px 0 0 rgba(195,222,255,0.19),785px 619px 0 0 rgba(195,222,255,0.85),1241px 893px 0 0 rgba(195,222,255,0.27),526px 399px 0 0 rgba(255,255,255,0.59),451px 377px 0 0 rgba(255,255,255,0.90),1080px 696px 0 0 rgba(195,222,255,0.60),404px 277px 0 0 rgba(255,255,255,0.42),387px 937px 0 .5px rgba(195,222,255,0.26),817px 170px 0 .5px rgba(255,255,255,0.93),972px 281px 0 0 rgba(255,255,255,0.50),606px 378px 0 0 rgba(255,255,255,0.48),356px 448px 0 .5px rgba(255,255,255,0.82),1027px 659px 0 .5px rgba(195,222,255,0.56),99px 148px 0 0 rgba(255,255,255,0.86),580px 45px 0 0 rgba(255,255,255,0.74),539px 64px 0 0 rgba(255,255,255,0.58),1181px 384px 0 0 rgba(255,255,255,0.91),1034px 154px 0 0 rgba(255,255,255,0.41),119px 126px 0 0 rgba(255,255,255,0.62),740px 1007px 0 0 rgba(195,222,255,0.42),827px 777px 0 0 rgba(195,222,255,0.66),202px 689px 0 0 rgba(195,222,255,0.69),913px 538px 0 0 rgba(195,222,255,0.80),1056px 807px 0 .5px rgba(195,222,255,0.41),205px 76px 0 0 rgba(255,255,255,0.97),596px 462px 0 0 rgba(195,222,255,0.72),425px 797px 0 0 rgba(195,222,255,0.90),701px 31px 0 0 rgba(255,255,255,0.41),342px 98px 0 0 rgba(255,255,255,0.85),529px 687px 0 .5px rgba(195,222,255,0.69),329px 485px 0 .5px rgba(195,222,255,0.79),253px 165px 0 0 rgba(255,255,255,0.70),1264px 33px 0 0 rgba(255,255,255,0.89),1057px 186px 0 0 rgba(255,255,255,0.99),1047px 775px 0 .5px rgba(195,222,255,0.96),211px 149px 0 0 rgba(255,255,255,0.50),606px 926px 0 0 rgba(195,222,255,0.19),830px 268px 0 0 rgba(255,255,255,0.82),585px 460px 0 0 rgba(195,222,255,0.65),877px 478px 0 0 rgba(195,222,255,0.81),186px 588px 0 0 rgba(195,222,255,0.38),42px 384px 0 0 rgba(255,255,255,0.40),1072px 958px 0 0 rgba(195,222,255,0.16),398px 393px 0 0 rgba(255,255,255,0.44),489px 856px 0 .5px rgba(195,222,255,0.46),980px 45px 0 0 rgba(255,255,255,0.50),107px 809px 0 0 rgba(195,222,255,0.47),943px 787px 0 0 rgba(195,222,255,0.55),604px 380px 0 0 rgba(255,255,255,0.87),1178px 828px 0 0 rgba(195,222,255,0.74),219px 954px 0 0 rgba(195,222,255,0.45),155px 823px 0 0 rgba(195,222,255,0.55),871px 857px 0 0 rgba(195,222,255,0.48),653px 882px 0 0 rgba(195,222,255,0.17),536px 318px 0 0 rgba(255,255,255,0.96),91px 837px 0 0 rgba(195,222,255,0.51),291px 365px 0 .5px rgba(255,255,255,0.39),699px 436px 0 0 rgba(255,255,255,0.61),22px 317px 0 0 rgba(255,255,255,0.79),483px 514px 0 .5px rgba(195,222,255,0.53),381px 322px 0 .5px rgba(255,255,255,0.42),25px 503px 0 0 rgba(195,222,255,0.92),673px 467px 0 .5px rgba(195,222,255,0.37),712px 804px 0 0 rgba(195,222,255,0.67),644px 770px 0 0 rgba(195,222,255,0.87),929px 910px 0 0 rgba(195,222,255,0.35),741px 555px 0 0 rgba(195,222,255,0.69),67px 875px 0 0 rgba(195,222,255,0.38),1163px 619px 0 0 rgba(195,222,255,0.38),1214px 400px 0 0 rgba(255,255,255,0.46),965px 172px 0 0 rgba(255,255,255,0.67),1131px 332px 0 0 rgba(255,255,255,0.35),1125px 752px 0 0 rgba(195,222,255,0.86),908px 110px 0 .5px rgba(255,255,255,0.83),676px 951px 0 0 rgba(195,222,255,0.16),134px 363px 0 0 rgba(255,255,255,0.93),570px 152px 0 0 rgba(255,255,255,0.53),427px 138px 0 0 rgba(255,255,255,0.62),763px 459px 0 0 rgba(195,222,255,0.96),1061px 924px 0 0 rgba(195,222,255,0.22),823px 483px 0 0 rgba(195,222,255,0.74),400px 1007px 0 .5px rgba(195,222,255,0.16),935px 236px 0 .5px rgba(255,255,255,0.90),310px 263px 0 0 rgba(255,255,255,0.86),131px 289px 0 0 rgba(255,255,255,0.98),605px 736px 0 0 rgba(195,222,255,0.84),347px 532px 0 0 rgba(195,222,255,0.69),818px 349px 0 0 rgba(255,255,255,0.45),290px 238px 0 0 rgba(255,255,255,0.97),1077px 941px 0 0 rgba(195,222,255,0.40),95px 588px 0 0 rgba(195,222,255,0.83),56px 855px 0 0 rgba(195,222,255,0.39),1144px 511px 0 0 rgba(195,222,255,0.99),851px 695px 0 0 rgba(195,222,255,0.80),87px 660px 0 0 rgba(195,222,255,0.94),592px 821px 0 0 rgba(195,222,255,0.48),702px 700px 0 .5px rgba(195,222,255,0.42),313px 422px 0 0 rgba(255,255,255,0.50),890px 439px 0 0 rgba(255,255,255,0.94),1111px 50px 0 0 rgba(255,255,255,0.75),453px 634px 0 .5px rgba(195,222,255,0.57),69px 684px 0 0 rgba(195,222,255,0.79),776px 688px 0 0 rgba(195,222,255,0.88),1267px 830px 0 .5px rgba(195,222,255,0.65),817px 635px 0 0 rgba(195,222,255,0.91),6px 388px 0 0 rgba(255,255,255,0.89),760px 1001px 0 0 rgba(195,222,255,0.41),592px 1006px 0 0 rgba(195,222,255,0.42),417px 41px 0 0 rgba(255,255,255,0.58),352px 419px 0 .5px rgba(255,255,255,0.80),506px 331px 0 0 rgba(255,255,255,0.43),1027px 447px 0 0 rgba(255,255,255,0.57),679px 223px 0 .5px rgba(255,255,255,0.50),1146px 327px 0 0 rgba(255,255,255,0.54),341px 546px 0 .5px rgba(195,222,255,0.70),364px 374px 0 0 rgba(255,255,255,0.88),761px 720px 0 0 rgba(195,222,255,0.91),167px 84px 0 0 rgba(255,255,255,0.84),992px 1004px 0 0 rgba(195,222,255,0.20),774px 645px 0 0 rgba(195,222,255,0.44),344px 533px 0 0 rgba(195,222,255,0.99),856px 99px 0 0 rgba(255,255,255,0.52),777px 328px 0 0 rgba(255,255,255,0.56),1268px 922px 0 0 rgba(195,222,255,0.42),1055px 279px 0 0 rgba(255,255,255,0.41),127px 104px 0 0 rgba(255,255,255,0.97),675px 736px 0 0 rgba(195,222,255,0.35),1135px 90px 0 0 rgba(255,255,255,0.88),36px 470px 0 .5px rgba(195,222,255,0.80),1184px 548px 0 .5px rgba(195,222,255,0.79),898px 740px 0 0 rgba(195,222,255,0.56),529px 600px 0 0 rgba(195,222,255,0.69),1138px 313px 0 0 rgba(255,255,255,0.58),244px 391px 0 0 rgba(255,255,255,0.35),1257px 770px 0 .5px rgba(195,222,255,0.73),63px 191px 0 0 rgba(255,255,255,0.75),379px 971px 0 0 rgba(195,222,255,0.22),37px 175px 0 0 rgba(255,255,255,0.67),1218px 393px 0 0 rgba(255,255,255,0.55),132px 554px 0 0 rgba(195,222,255,0.37),64px 891px 0 0 rgba(195,222,255,0.36),1066px 707px 0 .5px rgba(195,222,255,0.82),1238px 184px 0 0 rgba(255,255,255,0.95),66px 563px 0 0 rgba(195,222,255,0.59),378px 96px 0 0 rgba(255,255,255,0.38),105px 378px 0 0 rgba(255,255,255,0.58),789px 457px 0 .5px rgba(195,222,255,0.78),72px 556px 0 0 rgba(195,222,255,0.64),1053px 289px 0 0 rgba(255,255,255,0.51),5px 811px 0 0 rgba(195,222,255,0.71),1213px 734px 0 .5px rgba(195,222,255,0.80),617px 226px 0 0 rgba(255,255,255,0.53),888px 118px 0 .5px rgba(255,255,255,0.62),1197px 149px 0 0 rgba(255,255,255,0.90),1260px 414px 0 0 rgba(255,255,255,0.46),267px 958px 0 .5px rgba(195,222,255,0.15),1029px 112px 0 0 rgba(255,255,255,0.74),822px 143px 0 0 rgba(255,255,255,0.44),824px 615px 0 0 rgba(195,222,255,0.87),389px 165px 0 0 rgba(255,255,255,0.44),1111px 58px 0 0 rgba(255,255,255,0.79),1168px 511px 0 0 rgba(195,222,255,0.89),276px 824px 0 .5px rgba(195,222,255,0.57),606px 783px 0 0 rgba(195,222,255,0.99),1109px 455px 0 0 rgba(195,222,255,0.98),1182px 899px 0 0 rgba(195,222,255,0.23),866px 93px 0 0 rgba(255,255,255,0.97),729px 174px 0 0 rgba(255,255,255,0.39),534px 109px 0 0 rgba(255,255,255,0.88),585px 871px 0 .5px rgba(195,222,255,0.28),729px 807px 0 .5px rgba(195,222,255,0.62),81px 482px 0 .5px rgba(195,222,255,0.43),176px 449px 0 0 rgba(255,255,255,0.89),708px 884px 0 0 rgba(195,222,255,0.20),749px 857px 0 0 rgba(195,222,255,0.77),256px 77px 0 0 rgba(255,255,255,0.63),757px 959px 0 .5px rgba(195,222,255,0.23),524px 580px 0 .5px rgba(195,222,255,0.95),20px 232px 0 0 rgba(255,255,255,0.37),197px 888px 0 0 rgba(195,222,255,0.15),787px 273px 0 0 rgba(255,255,255,0.94),776px 306px 0 0 rgba(255,255,255,0.54),1113px 284px 0 0 rgba(255,255,255,0.79),1221px 371px 0 0 rgba(255,255,255,0.73),397px 667px 0 .5px rgba(195,222,255,0.42),310px 631px 0 0 rgba(195,222,255,0.42),966px 170px 0 0 rgba(255,255,255,0.53),1061px 949px 0 0 rgba(195,222,255,0.40),1197px 625px 0 0 rgba(195,222,255,0.75),485px 349px 0 0 rgba(255,255,255,0.72),1106px 662px 0 .5px rgba(195,222,255,0.82),470px 57px 0 0 rgba(255,255,255,0.63),663px 569px 0 0 rgba(195,222,255,0.74),714px 698px 0 .5px rgba(195,222,255,0.71),563px 152px 0 0 rgba(255,255,255,0.93),736px 319px 0 0 rgba(255,255,255,0.69),1010px 206px 0 0 rgba(255,255,255,0.41),260px 304px 0 .5px rgba(255,255,255,0.48),220px 546px 0 0 rgba(195,222,255,0.77),615px 645px 0 0 rgba(195,222,255,0.75),881px 487px 0 0 rgba(195,222,255,0.49),1248px 607px 0 0 rgba(195,222,255,0.75),369px 787px 0 0 rgba(195,222,255,0.59),921px 754px 0 0 rgba(195,222,255,0.47),634px 997px 0 0 rgba(195,222,255,0.45),111px 409px 0 0 rgba(255,255,255,0.36),788px 738px 0 0 rgba(195,222,255,0.86),773px 761px 0 0 rgba(195,222,255,0.76),717px 687px 0 0 rgba(195,222,255,0.41),548px 723px 0 0 rgba(195,222,255,0.98),655px 194px 0 0 rgba(255,255,255,0.58),227px 905px 0 0 rgba(195,222,255,0.36),1276px 539px 0 0 rgba(195,222,255,0.41),1251px 36px 0 0 rgba(255,255,255,0.94),589px 658px 0 0 rgba(195,222,255,0.46),1113px 464px 0 0 rgba(195,222,255,0.42),708px 494px 0 0 rgba(195,222,255,0.87),1222px 349px 0 0 rgba(255,255,255,0.74),1110px 569px 0 0 rgba(195,222,255,0.38),369px 510px 0 .5px rgba(195,222,255,0.45),540px 461px 0 0 rgba(195,222,255,0.74),606px 641px 0 0 rgba(195,222,255,0.87),1250px 264px 0 0 rgba(255,255,255,0.71),912px 281px 0 0 rgba(255,255,255,0.63),1101px 282px 0 0 rgba(255,255,255,0.52),513px 462px 0 0 rgba(195,222,255,0.73),718px 570px 0 0 rgba(195,222,255,0.97),1264px 121px 0 .5px rgba(255,255,255,0.36),353px 836px 0 .5px rgba(195,222,255,0.37),1080px 518px 0 .5px rgba(195,222,255,0.36),68px 43px 0 0 rgba(255,255,255,0.55),830px 984px 0 0 rgba(195,222,255,0.41),862px 927px 0 0 rgba(195,222,255,0.22),141px 502px 0 0 rgba(195,222,255,0.95),629px 227px 0 0 rgba(255,255,255,0.87),117px 609px 0 .5px rgba(195,222,255,0.51),880px 528px 0 0 rgba(195,222,255,0.50),961px 607px 0 0 rgba(195,222,255,1.00),583px 1011px 0 0 rgba(195,222,255,0.30),826px 114px 0 .5px rgba(255,255,255,0.42),694px 113px 0 0 rgba(255,255,255,0.48),571px 786px 0 0 rgba(195,222,255,0.45),796px 1010px 0 0 rgba(195,222,255,0.28),1073px 722px 0 .5px rgba(195,222,255,0.86),133px 798px 0 0 rgba(195,222,255,0.43),718px 212px 0 0 rgba(255,255,255,0.53),1044px 457px 0 0 rgba(195,222,255,0.96),630px 787px 0 .5px rgba(195,222,255,0.61),1180px 679px 0 0 rgba(195,222,255,0.80),456px 547px 0 0 rgba(195,222,255,0.60),616px 37px 0 0 rgba(255,255,255,0.68),325px 751px 0 .5px rgba(195,222,255,0.61),551px 618px 0 0 rgba(195,222,255,0.79),705px 802px 0 0 rgba(195,222,255,0.42),381px 279px 0 0 rgba(255,255,255,0.97),200px 758px 0 .5px rgba(195,222,255,0.76),163px 248px 0 0 rgba(255,255,255,0.37),471px 980px 0 0 rgba(195,222,255,0.15),58px 683px 0 .5px rgba(195,222,255,0.85),997px 260px 0 0 rgba(255,255,255,0.85),1025px 531px 0 0 rgba(195,222,255,0.74),87px 212px 0 0 rgba(255,255,255,0.47),589px 617px 0 0 rgba(195,222,255,0.76),526px 666px 0 0 rgba(195,222,255,0.90),1262px 897px 0 0 rgba(195,222,255,0.40),707px 710px 0 .5px rgba(195,222,255,0.51),318px 681px 0 0 rgba(195,222,255,0.75),549px 628px 0 0 rgba(195,222,255,0.51),1134px 716px 0 0 rgba(195,222,255,0.56),549px 471px 0 0 rgba(195,222,255,0.76),1036px 786px 0 0 rgba(195,222,255,0.82),572px 472px 0 0 rgba(195,222,255,0.77),535px 847px 0 0 rgba(195,222,255,0.71),14px 389px 0 0 rgba(255,255,255,0.53),175px 967px 0 0 rgba(195,222,255,0.42),358px 809px 0 0 rgba(195,222,255,0.36),382px 97px 0 0 rgba(255,255,255,0.96),1067px 841px 0 0 rgba(195,222,255,0.47),485px 123px 0 0 rgba(255,255,255,0.67),853px 315px 0 0 rgba(255,255,255,0.44),743px 88px 0 0 rgba(255,255,255,0.73),1199px 443px 0 0 rgba(255,255,255,0.82),230px 890px 0 0 rgba(195,222,255,0.24),1223px 620px 0 .5px rgba(195,222,255,0.79),598px 960px 0 0 rgba(195,222,255,0.21),1094px 649px 0 0 rgba(195,222,255,0.71),597px 493px 0 0 rgba(195,222,255,0.58),324px 177px 0 .5px rgba(255,255,255,0.43),944px 547px 0 0 rgba(195,222,255,0.61),843px 629px 0 0 rgba(195,222,255,0.54),1082px 373px 0 0 rgba(255,255,255,0.51),228px 703px 0 .5px rgba(195,222,255,0.83),485px 410px 0 0 rgba(255,255,255,0.57),512px 188px 0 0 rgba(255,255,255,0.41),912px 378px 0 0 rgba(255,255,255,0.63),903px 896px 0 0 rgba(195,222,255,0.40),529px 946px 0 .5px rgba(195,222,255,0.33),420px 389px 0 .5px rgba(255,255,255,0.75),95px 773px 0 0 rgba(195,222,255,0.62),809px 859px 0 0 rgba(195,222,255,0.45),790px 262px 0 0 rgba(255,255,255,0.62),348px 472px 0 0 rgba(195,222,255,0.55),311px 373px 0 0 rgba(255,255,255,0.70),102px 956px 0 0 rgba(195,222,255,0.25),885px 518px 0 .5px rgba(195,222,255,0.79),227px 80px 0 0 rgba(255,255,255,0.55),146px 313px 0 0 rgba(255,255,255,0.37),204px 777px 0 0 rgba(195,222,255,0.41),179px 108px 0 0 rgba(255,255,255,0.67),648px 803px 0 0 rgba(195,222,255,0.69),1051px 57px 0 0 rgba(255,255,255,0.60),553px 134px 0 0 rgba(255,255,255,0.70),1197px 103px 0 0 rgba(255,255,255,0.96),938px 566px 0 0 rgba(195,222,255,0.74),822px 199px 0 0 rgba(255,255,255,0.64),376px 71px 0 0 rgba(255,255,255,0.42),366px 502px 0 0 rgba(195,222,255,0.86),502px 316px 0 .5px rgba(255,255,255,0.35),1231px 66px 0 0 rgba(255,255,255,0.92),690px 957px 0 .5px rgba(195,222,255,0.35),782px 460px 0 0 rgba(195,222,255,0.62),838px 368px 0 0 rgba(255,255,255,0.49),673px 452px 0 .5px rgba(195,222,255,0.39),213px 735px 0 0 rgba(195,222,255,0.66),940px 631px 0 0 rgba(195,222,255,0.85),506px 412px 0 .5px rgba(255,255,255,0.84),347px 492px 0 0 rgba(195,222,255,0.71),649px 878px 0 .5px rgba(195,222,255,0.36),1190px 680px 0 0 rgba(195,222,255,0.75),527px 533px 0 .5px rgba(195,222,255,0.47),660px 813px 0 0 rgba(195,222,255,0.38),833px 848px 0 0 rgba(195,222,255,0.47),651px 209px 0 0 rgba(255,255,255,0.65),239px 293px 0 .5px rgba(255,255,255,0.46),853px 666px 0 0 rgba(195,222,255,0.51),584px 447px 0 0 rgba(255,255,255,0.95),956px 489px 0 0 rgba(195,222,255,0.83),937px 99px 0 0 rgba(255,255,255,0.84),953px 145px 0 0 rgba(255,255,255,0.46),815px 643px 0 0 rgba(195,222,255,0.40),142px 752px 0 0 rgba(195,222,255,0.38),806px 870px 0 .5px rgba(195,222,255,0.22),1079px 854px 0 .5px rgba(195,222,255,0.81),13px 770px 0 0 rgba(195,222,255,0.46),46px 973px 0 0 rgba(195,222,255,0.20),343px 781px 0 0 rgba(195,222,255,0.40),1163px 986px 0 .5px rgba(195,222,255,0.32),831px 759px 0 0 rgba(195,222,255,0.89),1250px 525px 0 0 rgba(195,222,255,0.65),1009px 658px 0 0 rgba(195,222,255,0.73),1147px 298px 0 0 rgba(255,255,255,0.92),770px 58px 0 0 rgba(255,255,255,0.75),927px 580px 0 .5px rgba(195,222,255,0.84),561px 687px 0 0 rgba(195,222,255,0.49),940px 387px 0 0 rgba(255,255,255,0.71),1008px 84px 0 0 rgba(255,255,255,0.84),81px 804px 0 0 rgba(195,222,255,0.53),1055px 323px 0 .5px rgba(255,255,255,0.48),65px 474px 0 0 rgba(195,222,255,0.37),694px 625px 0 0 rgba(195,222,255,0.40),390px 545px 0 .5px rgba(195,222,255,0.50),470px 506px 0 0 rgba(195,222,255,0.73),777px 302px 0 0 rgba(255,255,255,0.52),761px 231px 0 0 rgba(255,255,255,0.83),1167px 553px 0 0 rgba(195,222,255,0.99),341px 383px 0 0 rgba(255,255,255,0.76),121px 204px 0 0 rgba(255,255,255,0.77),1032px 938px 0 0 rgba(195,222,255,0.31),67px 346px 0 0 rgba(255,255,255,0.42),11px 324px 0 0 rgba(255,255,255,0.99),580px 793px 0 .5px rgba(195,222,255,0.98),829px 496px 0 0 rgba(195,222,255,0.37),868px 363px 0 .5px rgba(255,255,255,0.40),1010px 115px 0 0 rgba(255,255,255,0.96),117px 553px 0 0 rgba(195,222,255,0.86),812px 801px 0 .5px rgba(195,222,255,0.72),104px 171px 0 0 rgba(255,255,255,0.63),62px 970px 0 .5px rgba(195,222,255,0.38),1181px 132px 0 0 rgba(255,255,255,0.49),511px 606px 0 .5px rgba(195,222,255,0.58),476px 715px 0 0 rgba(195,222,255,0.74),542px 105px 0 0 rgba(255,255,255,0.58),252px 642px 0 .5px rgba(195,222,255,0.65),89px 536px 0 0 rgba(195,222,255,0.44),272px 560px 0 0 rgba(195,222,255,0.73),67px 722px 0 0 rgba(195,222,255,0.90),372px 200px 0 .5px rgba(255,255,255,0.76),283px 929px 0 .5px rgba(195,222,255,0.27),1231px 479px 0 .5px rgba(195,222,255,0.47),819px 569px 0 .5px rgba(195,222,255,0.44),306px 625px 0 0 rgba(195,222,255,0.37),1032px 885px 0 0 rgba(195,222,255,0.41),768px 335px 0 0 rgba(255,255,255,0.75),299px 575px 0 .5px rgba(195,222,255,0.51),744px 87px 0 0 rgba(255,255,255,0.41),187px 975px 0 0 rgba(195,222,255,0.44),491px 36px 0 0 rgba(255,255,255,0.58),312px 96px 0 0 rgba(255,255,255,0.36),297px 504px 0 0 rgba(195,222,255,0.95),1026px 522px 0 0 rgba(195,222,255,0.58),451px 796px 0 0 rgba(195,222,255,0.83),536px 201px 0 0 rgba(255,255,255,0.42),637px 278px 0 0 rgba(255,255,255,0.88),929px 925px 0 0 rgba(195,222,255,0.36),1176px 710px 0 0 rgba(195,222,255,0.74),683px 572px 0 0 rgba(195,222,255,0.96),641px 217px 0 0 rgba(255,255,255,0.55),3px 657px 0 0 rgba(195,222,255,0.49),870px 420px 0 0 rgba(255,255,255,0.66),1246px 709px 0 0 rgba(195,222,255,0.41),784px 634px 0 0 rgba(195,222,255,0.68),1116px 1004px 0 0 rgba(195,222,255,0.28),1031px 687px 0 .5px rgba(195,222,255,1.00),297px 239px 0 0 rgba(255,255,255,0.88),621px 253px 0 0 rgba(255,255,255,0.93),1143px 608px 0 .5px rgba(195,222,255,0.95),373px 981px 0 0 rgba(195,222,255,0.33),392px 319px 0 0 rgba(255,255,255,0.94),120px 992px 0 0 rgba(195,222,255,0.34),929px 972px 0 .5px rgba(195,222,255,0.23),332px 201px 0 0 rgba(255,255,255,0.72),111px 176px 0 0 rgba(255,255,255,0.80),657px 152px 0 0 rgba(255,255,255,0.99),1038px 557px 0 0 rgba(195,222,255,0.37),942px 793px 0 0 rgba(195,222,255,0.57),79px 956px 0 0 rgba(195,222,255,0.17),191px 968px 0 0 rgba(195,222,255,0.21),722px 807px 0 .5px rgba(195,222,255,0.78),750px 226px 0 .5px rgba(255,255,255,0.82),402px 119px 0 0 rgba(255,255,255,0.62),95px 198px 0 0 rgba(255,255,255,0.77),1177px 655px 0 0 rgba(195,222,255,0.43),1084px 389px 0 0 rgba(255,255,255,0.74),1223px 931px 0 0 rgba(195,222,255,0.19),717px 114px 0 0 rgba(255,255,255,0.50),10px 380px 0 0 rgba(255,255,255,0.93),666px 294px 0 0 rgba(255,255,255,0.39),150px 736px 0 .5px rgba(195,222,255,0.75),120px 552px 0 0 rgba(195,222,255,0.53),837px 566px 0 0 rgba(195,222,255,0.95),268px 375px 0 0 rgba(255,255,255,0.83),246px 239px 0 0 rgba(255,255,255,0.62),1041px 461px 0 0 rgba(195,222,255,0.66),524px 282px 0 .5px rgba(255,255,255,0.82),324px 477px 0 0 rgba(195,222,255,0.54),738px 225px 0 0 rgba(255,255,255,0.38),232px 290px 0 0 rgba(255,255,255,0.89),170px 904px 0 0 rgba(195,222,255,0.21),1067px 531px 0 0 rgba(195,222,255,0.89),35px 47px 0 0 rgba(255,255,255,0.57),449px 36px 0 0 rgba(255,255,255,0.43),408px 237px 0 0 rgba(255,255,255,0.46),563px 141px 0 0 rgba(255,255,255,0.49),914px 1010px 0 0 rgba(195,222,255,0.37),1236px 993px 0 0 rgba(195,222,255,0.34),697px 78px 0 0 rgba(255,255,255,0.67),1046px 1013px 0 0 rgba(195,222,255,0.22),49px 633px 0 0 rgba(195,222,255,0.49),948px 814px 0 .5px rgba(195,222,255,0.78),381px 953px 0 0 rgba(195,222,255,0.38),674px 511px 0 0 rgba(195,222,255,0.95),1091px 418px 0 0 rgba(255,255,255,0.46),60px 346px 0 .5px rgba(255,255,255,0.61),1047px 984px 0 .5px rgba(195,222,255,0.29),989px 289px 0 .5px rgba(255,255,255,0.54),740px 451px 0 0 rgba(195,222,255,0.43),953px 578px 0 0 rgba(195,222,255,0.61),960px 282px 0 0 rgba(255,255,255,0.40),222px 567px 0 0 rgba(195,222,255,0.88),1129px 158px 0 0 rgba(255,255,255,0.97),922px 809px 0 0 rgba(195,222,255,0.72),1044px 338px 0 0 rgba(255,255,255,0.86),730px 97px 0 0 rgba(255,255,255,0.81),1144px 51px 0 0 rgba(255,255,255,0.86),561px 358px 0 .5px rgba(255,255,255,0.88),905px 742px 0 0 rgba(195,222,255,0.65),1131px 652px 0 0 rgba(195,222,255,0.48),638px 318px 0 0 rgba(255,255,255,0.84),1092px 927px 0 0 rgba(195,222,255,0.44),116px 756px 0 0 rgba(195,222,255,0.61),1154px 134px 0 0 rgba(255,255,255,0.59),687px 111px 0 0 rgba(255,255,255,0.57),550px 655px 0 .5px rgba(195,222,255,0.45),783px 708px 0 0 rgba(195,222,255,0.67),1160px 434px 0 0 rgba(255,255,255,0.39),404px 812px 0 0 rgba(195,222,255,0.57),972px 322px 0 0 rgba(255,255,255,0.41),440px 734px 0 0 rgba(195,222,255,0.82),131px 643px 0 0 rgba(195,222,255,0.56),594px 632px 0 0 rgba(195,222,255,0.37),348px 882px 0 0 rgba(195,222,255,0.21),131px 259px 0 0 rgba(255,255,255,0.40),987px 899px 0 0 rgba(195,222,255,0.33),344px 866px 0 0 rgba(195,222,255,0.26),820px 958px 0 0 rgba(195,222,255,0.34),422px 119px 0 0 rgba(255,255,255,0.50),806px 676px 0 .5px rgba(195,222,255,0.94),128px 233px 0 0 rgba(255,255,255,0.59),1023px 491px 0 0 rgba(195,222,255,0.47),375px 817px 0 0 rgba(195,222,255,0.82),37px 676px 0 0 rgba(195,222,255,0.58),357px 400px 0 0 rgba(255,255,255,1.00),619px 716px 0 0 rgba(195,222,255,0.76),373px 301px 0 0 rgba(255,255,255,0.50),150px 116px 0 0 rgba(255,255,255,0.68),856px 800px 0 .5px rgba(195,222,255,0.83),22px 533px 0 .5px rgba(195,222,255,0.69),155px 144px 0 0 rgba(255,255,255,0.57),99px 245px 0 0 rgba(255,255,255,0.43),1170px 1000px 0 0 rgba(195,222,255,0.19),20px 896px 0 0 rgba(195,222,255,0.19),1185px 980px 0 0 rgba(195,222,255,0.40),1199px 753px 0 0 rgba(195,222,255,0.93),1007px 781px 0 0 rgba(195,222,255,0.81),1190px 594px 0 .5px rgba(195,222,255,0.72),1115px 471px 0 0 rgba(195,222,255,0.81),968px 950px 0 0 rgba(195,222,255,0.22),9px 887px 0 0 rgba(195,222,255,0.43),16px 865px 0 0 rgba(195,222,255,0.25),842px 244px 0 0 rgba(255,255,255,0.87),146px 926px 0 0 rgba(195,222,255,0.24),945px 811px 0 0 rgba(195,222,255,0.99),947px 552px 0 0 rgba(195,222,255,0.88),1092px 699px 0 .5px rgba(195,222,255,0.89),905px 59px 0 0 rgba(255,255,255,0.88),969px 868px 0 .5px rgba(195,222,255,0.20),797px 678px 0 0 rgba(195,222,255,0.45),1067px 242px 0 0 rgba(255,255,255,0.96),704px 720px 0 0 rgba(195,222,255,0.94),298px 436px 0 0 rgba(255,255,255,0.90),44px 927px 0 .5px rgba(195,222,255,0.42),1216px 743px 0 0 rgba(195,222,255,0.56),83px 438px 0 0 rgba(255,255,255,0.90),46px 820px 0 .5px rgba(195,222,255,0.46),30px 834px 0 0 rgba(195,222,255,0.36),1083px 411px 0 0 rgba(255,255,255,0.91),457px 761px 0 0 rgba(195,222,255,0.85),601px 99px 0 0 rgba(255,255,255,0.63),884px 577px 0 0 rgba(195,222,255,0.61),871px 845px 0 .5px rgba(195,222,255,0.48),1218px 297px 0 0 rgba(255,255,255,0.60),895px 980px 0 0 rgba(195,222,255,0.26),1219px 524px 0 0 rgba(195,222,255,0.68),806px 704px 0 0 rgba(195,222,255,0.47),871px 452px 0 .5px rgba(195,222,255,0.85),328px 394px 0 0 rgba(255,255,255,0.97),1235px 473px 0 0 rgba(195,222,255,0.86),162px 526px 0 .5px rgba(195,222,255,0.59),577px 424px 0 0 rgba(255,255,255,0.66),212px 555px 0 0 rgba(195,222,255,0.47),524px 538px 0 0 rgba(195,222,255,0.67),759px 698px 0 0 rgba(195,222,255,0.38),746px 276px 0 0 rgba(255,255,255,0.65),950px 980px 0 0 rgba(195,222,255,0.34),935px 141px 0 0 rgba(255,255,255,0.48),339px 605px 0 0 rgba(195,222,255,0.91),29px 988px 0 0 rgba(195,222,255,0.29),830px 596px 0 0 rgba(195,222,255,0.73),474px 464px 0 0 rgba(195,222,255,0.84),1180px 295px 0 .5px rgba(255,255,255,0.50),1165px 560px 0 0 rgba(195,222,255,0.91),654px 632px 0 .5px rgba(195,222,255,0.54),1066px 466px 0 0 rgba(195,222,255,0.71),696px 818px 0 0 rgba(195,222,255,0.73),1066px 923px 0 0 rgba(195,222,255,0.20),461px 697px 0 0 rgba(195,222,255,0.83),646px 713px 0 0 rgba(195,222,255,0.76),615px 907px 0 0 rgba(195,222,255,0.27),122px 687px 0 0 rgba(195,222,255,0.68),214px 668px 0 0 rgba(195,222,255,0.54),724px 306px 0 0 rgba(255,255,255,0.91),975px 667px 0 0 rgba(195,222,255,0.60),265px 672px 0 0 rgba(195,222,255,0.84),83px 898px 0 0 rgba(195,222,255,0.42),790px 158px 0 0 rgba(255,255,255,0.58),687px 629px 0 0 rgba(195,222,255,0.70),995px 637px 0 0 rgba(195,222,255,0.82),602px 845px 0 .5px rgba(195,222,255,0.77),579px 110px 0 0 rgba(255,255,255,0.79),370px 975px 0 0 rgba(195,222,255,0.30),197px 986px 0 0 rgba(195,222,255,0.23),439px 387px 0 0 rgba(255,255,255,0.44),741px 466px 0 0 rgba(195,222,255,0.51),893px 134px 0 0 rgba(255,255,255,0.39),1217px 350px 0 0 rgba(255,255,255,0.64),302px 59px 0 0 rgba(255,255,255,0.99),332px 68px 0 0 rgba(255,255,255,0.59),390px 406px 0 0 rgba(255,255,255,0.66),663px 210px 0 0 rgba(255,255,255,0.72),580px 759px 0 0 rgba(195,222,255,0.49),389px 146px 0 0 rgba(255,255,255,0.62),1102px 238px 0 0 rgba(255,255,255,0.55),167px 630px 0 .5px rgba(195,222,255,0.63),935px 564px 0 0 rgba(195,222,255,0.91),587px 142px 0 0 rgba(255,255,255,0.78),633px 960px 0 .5px rgba(195,222,255,0.41),891px 413px 0 0 rgba(255,255,255,0.89),973px 876px 0 0 rgba(195,222,255,0.27),144px 539px 0 0 rgba(195,222,255,0.93),301px 909px 0 .5px rgba(195,222,255,0.38),387px 522px 0 0 rgba(195,222,255,0.68),555px 572px 0 0 rgba(195,222,255,0.84),254px 304px 0 0 rgba(255,255,255,0.50),645px 448px 0 0 rgba(255,255,255,0.85),378px 287px 0 .5px rgba(255,255,255,0.69),48px 655px 0 0 rgba(195,222,255,0.74),1268px 407px 0 .5px rgba(255,255,255,0.55),308px 135px 0 0 rgba(255,255,255,0.83),1130px 379px 0 0 rgba(255,255,255,0.46),682px 593px 0 0 rgba(195,222,255,0.86),809px 918px 0 0 rgba(195,222,255,0.36),721px 238px 0 .5px rgba(255,255,255,0.96),394px 355px 0 0 rgba(255,255,255,0.52),172px 669px 0 0 rgba(195,222,255,0.81),24px 94px 0 0 rgba(255,255,255,0.74),648px 572px 0 0 rgba(195,222,255,0.61),765px 929px 0 0 rgba(195,222,255,0.37),984px 900px 0 0 rgba(195,222,255,0.30),1253px 326px 0 .5px rgba(255,255,255,0.77),547px 543px 0 0 rgba(195,222,255,0.74),618px 921px 0 0 rgba(195,222,255,0.40),699px 904px 0 0 rgba(195,222,255,0.31),720px 958px 0 0 rgba(195,222,255,0.31),346px 481px 0 0 rgba(195,222,255,0.64),467px 106px 0 0 rgba(255,255,255,0.37),1159px 124px 0 0 rgba(255,255,255,0.56),373px 571px 0 0 rgba(195,222,255,0.82),53px 937px 0 0 rgba(195,222,255,0.17),337px 708px 0 0 rgba(195,222,255,0.77),352px 531px 0 0 rgba(195,222,255,0.70),328px 864px 0 0 rgba(195,222,255,0.32),615px 891px 0 0 rgba(195,222,255,0.41),520px 432px 0 0 rgba(255,255,255,0.98),995px 553px 0 0 rgba(195,222,255,0.74),335px 678px 0 .5px rgba(195,222,255,0.60),1055px 740px 0 0 rgba(195,222,255,0.83),137px 774px 0 0 rgba(195,222,255,0.56),1124px 136px 0 0 rgba(255,255,255,0.87),937px 236px 0 .5px rgba(255,255,255,0.77),241px 552px 0 0 rgba(195,222,255,0.91),506px 43px 0 0 rgba(255,255,255,0.36),919px 904px 0 0 rgba(195,222,255,0.15),833px 290px 0 0 rgba(255,255,255,0.85),314px 144px 0 0 rgba(255,255,255,0.83),1193px 401px 0 0 rgba(255,255,255,0.62),447px 670px 0 0 rgba(195,222,255,0.86),1057px 846px 0 0 rgba(195,222,255,0.47),157px 469px 0 0 rgba(195,222,255,0.94),77px 632px 0 0 rgba(195,222,255,0.97),167px 704px 0 0 rgba(195,222,255,0.78),279px 496px 0 0 rgba(195,222,255,0.45),956px 625px 0 0 rgba(195,222,255,0.83),388px 572px 0 0 rgba(195,222,255,0.78),373px 802px 0 .5px rgba(195,222,255,0.60),275px 68px 0 0 rgba(255,255,255,0.36),1129px 404px 0 0 rgba(255,255,255,0.38),1063px 124px 0 0 rgba(255,255,255,0.58),456px 631px 0 .5px rgba(195,222,255,0.36),921px 699px 0 0 rgba(195,222,255,1.00),439px 788px 0 0 rgba(195,222,255,0.69),1170px 435px 0 0 rgba(255,255,255,0.51),578px 925px 0 0 rgba(195,222,255,0.39),922px 375px 0 0 rgba(255,255,255,0.77),117px 1013px 0 0 rgba(195,222,255,0.40),606px 729px 0 .5px rgba(195,222,255,0.84),1108px 690px 0 0 rgba(195,222,255,0.62),642px 715px 0 0 rgba(195,222,255,0.85),669px 148px 0 0 rgba(255,255,255,0.84),1068px 485px 0 0 rgba(195,222,255,0.36),465px 376px 0 0 rgba(255,255,255,0.80),199px 313px 0 0 rgba(255,255,255,0.62),919px 1010px 0 0 rgba(195,222,255,0.36),206px 930px 0 0 rgba(195,222,255,0.19),669px 49px 0 0 rgba(255,255,255,0.61),288px 645px 0 0 rgba(195,222,255,0.39),598px 574px 0 .5px rgba(195,222,255,0.73),1062px 384px 0 0 rgba(255,255,255,0.54),1201px 206px 0 0 rgba(255,255,255,0.92),471px 355px 0 0 rgba(255,255,255,0.92),1096px 968px 0 .5px rgba(195,222,255,0.35),214px 958px 0 0 rgba(195,222,255,0.37),842px 66px 0 0 rgba(255,255,255,0.52),855px 208px 0 .5px rgba(255,255,255,0.63),396px 308px 0 0 rgba(255,255,255,0.85),212px 951px 0 0 rgba(195,222,255,0.21),264px 346px 0 .5px rgba(255,255,255,0.84),170px 559px 0 0 rgba(195,222,255,0.55),1202px 486px 0 0 rgba(195,222,255,0.83),325px 1005px 0 0 rgba(195,222,255,0.21),927px 789px 0 0 rgba(195,222,255,0.68),1214px 358px 0 0 rgba(255,255,255,0.83),1175px 562px 0 0 rgba(195,222,255,0.66),1217px 467px 0 0 rgba(195,222,255,0.56),704px 582px 0 0 rgba(195,222,255,0.90),904px 209px 0 0 rgba(255,255,255,0.69),1164px 144px 0 0 rgba(255,255,255,0.99),106px 592px 0 0 rgba(195,222,255,0.56),480px 115px 0 0 rgba(255,255,255,0.59),169px 98px 0 0 rgba(255,255,255,0.97),575px 259px 0 0 rgba(255,255,255,0.59),953px 205px 0 0 rgba(255,255,255,0.96),1043px 975px 0 0 rgba(195,222,255,0.31),470px 710px 0 0 rgba(195,222,255,0.40),864px 835px 0 0 rgba(195,222,255,0.38),664px 76px 0 0 rgba(255,255,255,0.47),787px 258px 0 0 rgba(255,255,255,0.81),77px 528px 0 .5px rgba(195,222,255,0.37),225px 156px 0 0 rgba(255,255,255,0.54),460px 868px 0 0 rgba(195,222,255,0.29),641px 208px 0 0 rgba(255,255,255,0.38),726px 944px 0 0 rgba(195,222,255,0.24),637px 524px 0 0 rgba(195,222,255,0.76),1250px 907px 0 0 rgba(195,222,255,0.44),1024px 702px 0 .5px rgba(195,222,255,0.48)"></div>

<svg width="0" height="0" style="position:absolute"><defs>
<linearGradient id="acg" x1="0" y1="0" x2="1" y2="1"><stop offset="0" stop-color="#fff"/><stop offset="1" stop-color="#d8d8d8"/></linearGradient>
<radialGradient id="domg" cx=".25" cy=".3" r=".8"><stop offset="0" stop-color="#fff"/><stop offset=".35" stop-color="#80b0ff"/><stop offset="1" stop-color="#1030a0"/></radialGradient>
<linearGradient id="mssg" x1="0" y1="0" x2="1" y2="1"><stop offset="0" stop-color="#f0f0f0"/><stop offset="1" stop-color="#909090"/></linearGradient>
<linearGradient id="wmpg" x1="0" y1="0" x2="1" y2="1"><stop offset="0" stop-color="#e04040"/><stop offset=".4" stop-color="#f0c020"/><stop offset=".7" stop-color="#40b040"/><stop offset="1" stop-color="#2060c0"/></linearGradient>
<linearGradient id="vocg" x1="0" y1="0" x2="1" y2="1"><stop offset="0" stop-color="#e8e8e8"/><stop offset="1" stop-color="#404040"/></linearGradient>
</defs></svg>
<svg class="a" style="left:24px;top:32px" width="32" height="32" viewBox="0 0 32 32"><path d="M2 6L22 1L28 4L26 18L4 20Z" fill="#8ec4f0"/><path d="M3 7L22 2L26 5L8 10Z" fill="#cfe6ff"/></svg>
<svg class="a" style="left:24px;top:108px" width="32" height="32" viewBox="0 0 32 32"><path d="M6 14H14L16 17H28V30H6Z" fill="#e8c860"/><path d="M7 18H30L27 30H5Z" fill="#f8e098"/><circle cx="18" cy="18" r="7" fill="#bfe0ff" stroke="#6aa0d0" stroke-width="2"/><path d="M22 23L29 30" stroke="#d0a040" stroke-width="3"/><rect x="0" y="21" width="11" height="11" fill="#000"/><rect x="0" y="21" width="10" height="10" fill="#fff"/><path d="M2.8 29Q3 26 6.5 24.8" stroke="#000" stroke-width="1.9" fill="none"/><path d="M4.6 22.6L8.8 23.1L8 27.3Z" fill="#000"/></svg>
<div class="dl" style="left:0px;top:143px">explorer</div>
<svg class="a" style="left:24px;top:184px" width="32" height="32" viewBox="0 0 32 32"><path d="M3 5Q9 3 16 5Q23 3 29 5Q23 7 16 5Q9 7 3 5Z" fill="#d84040"/><rect x="15" y="5" width="2" height="4" fill="#888"/><path d="M4 24Q4 9 16 9Q28 9 28 24Z" fill="#f0e040"/><path d="M12 24Q11 11 16 9Q21 11 20 24Z" fill="#f0a030"/><path d="M4 24Q5 14 10 11L8 24Z" fill="#40a0e0"/><path d="M28 24Q27 14 22 11L24 24Z" fill="#60c0e0"/><rect x="4" y="21" width="24" height="3" fill="#e0d060" opacity=".6"/><rect x="0" y="21" width="11" height="11" fill="#000"/><rect x="0" y="21" width="10" height="10" fill="#fff"/><path d="M2.8 29Q3 26 6.5 24.8" stroke="#000" stroke-width="1.9" fill="none"/><path d="M4.6 22.6L8.8 23.1L8 27.3Z" fill="#000"/></svg>
<div class="dl" style="left:0px;top:219px">Propeller Tool</div>
<div class="dl" style="left:0px;top:231px">v1.06</div>
<svg class="a" style="left:24px;top:260px" width="32" height="32" viewBox="0 0 32 32"><rect x="3" y="3" width="2" height="3" fill="#3a8a3a"/><rect x="3" y="5" width="9" height="14" fill="#2a6a2a" stroke="#50b050"/><rect x="5" y="8" width="5" height="4" fill="#c8d8c8"/><rect x="5" y="14" width="2" height="2" fill="#000"/><rect x="8" y="14" width="2" height="2" fill="#000"/><rect x="19" y="3" width="2" height="3" fill="#3a8a3a"/><rect x="19" y="5" width="9" height="14" fill="#2a6a2a" stroke="#50b050"/><rect x="21" y="8" width="5" height="4" fill="#c8d8c8"/><rect x="21" y="14" width="2" height="2" fill="#000"/><rect x="24" y="14" width="2" height="2" fill="#000"/><path d="M10 27H22L24 24" stroke="#9aa0a8" stroke-width="2" fill="none"/><rect x="21" y="21" width="7" height="3" rx="1" fill="#a0a8b0"/><rect x="0" y="21" width="11" height="11" fill="#000"/><rect x="0" y="21" width="10" height="10" fill="#fff"/><path d="M2.8 29Q3 26 6.5 24.8" stroke="#000" stroke-width="1.9" fill="none"/><path d="M4.6 22.6L8.8 23.1L8 27.3Z" fill="#000"/></svg>
<div class="dl" style="left:0px;top:295px">X-CTU</div>
<svg class="a" style="left:24px;top:336px" width="32" height="32" viewBox="0 0 32 32"><rect x="3" y="8" width="4" height="20" fill="#c8ccd0"/><rect x="25" y="8" width="4" height="20" fill="#c8ccd0"/><rect x="6" y="2" width="3" height="6" fill="#d0d4d8"/><rect x="23" y="2" width="3" height="6" fill="#d0d4d8"/><rect x="9" y="3" width="14" height="3" fill="#333"/><path d="M8 8H14L16 10H22V20H8Z" fill="#f0e020"/><rect x="12" y="12" width="11" height="14" fill="#fff" stroke="#222"/><path d="M14 15H21M14 18H21M14 21H19" stroke="#222"/><rect x="0" y="21" width="11" height="11" fill="#000"/><rect x="0" y="21" width="10" height="10" fill="#fff"/><path d="M2.8 29Q3 26 6.5 24.8" stroke="#000" stroke-width="1.9" fill="none"/><path d="M4.6 22.6L8.8 23.1L8 27.3Z" fill="#000"/></svg>
<div class="dl" style="left:0px;top:371px">+Lhaca</div>
<svg class="a" style="left:24px;top:412px" width="32" height="32" viewBox="0 0 32 32"><rect x="2" y="1" width="28" height="27" fill="#f0f0f0"/><rect x="2" y="1" width="28" height="27" fill="url(#acg)"/><path d="M14 6Q15 14 12 20Q9 26 8 23Q9 19 18 16Q24 15 26 18Q22 19 16 13Q14 9 15 6" stroke="#d82030" stroke-width="1.3" fill="none"/><rect x="0" y="21" width="11" height="11" fill="#000"/><rect x="0" y="21" width="10" height="10" fill="#fff"/><path d="M2.8 29Q3 26 6.5 24.8" stroke="#000" stroke-width="1.9" fill="none"/><path d="M4.6 22.6L8.8 23.1L8 27.3Z" fill="#000"/></svg>
<div class="dl" style="left:0px;top:447px">Adobe Acrobat</div>
<div class="dl" style="left:0px;top:459px">8 Standard</div>
<svg class="a" style="left:24px;top:488px" width="32" height="32" viewBox="0 0 32 32"><path d="M3 4H10L12 6H16V14H3Z" fill="#d8c040"/><rect x="3" y="7" width="13" height="8" fill="#f0e070"/><rect x="3" y="17" width="12" height="8" fill="#e0e0e0"/><rect x="4" y="18" width="10" height="2" fill="#808080"/><path d="M19 4V28M19 4H28M19 10H26M22 12V28M22 14H28V20H22M24 22V28" stroke="#c0c8d0" stroke-width="2" fill="none"/><rect x="0" y="21" width="11" height="11" fill="#000"/><rect x="0" y="21" width="10" height="10" fill="#fff"/><path d="M2.8 29Q3 26 6.5 24.8" stroke="#000" stroke-width="1.9" fill="none"/><path d="M4.6 22.6L8.8 23.1L8 27.3Z" fill="#000"/></svg>
<div class="dl" style="left:0px;top:523px">CUTFTP32</div>
<svg class="a" style="left:24px;top:564px" width="32" height="32" viewBox="0 0 32 32"><rect x="1" y="1" width="30" height="30" fill="#1838a0"/><rect x="1" y="1" width="30" height="30" fill="url(#domg)"/><path d="M9 16V7L15 9" stroke="#fff" stroke-width="1.5" fill="none"/><ellipse cx="7.5" cy="16" rx="2.5" ry="2" fill="#fff"/><rect x="0" y="21" width="11" height="11" fill="#000"/><rect x="0" y="21" width="10" height="10" fill="#fff"/><path d="M2.8 29Q3 26 6.5 24.8" stroke="#000" stroke-width="1.9" fill="none"/><path d="M4.6 22.6L8.8 23.1L8 27.3Z" fill="#000"/></svg>
<div class="dl" style="left:0px;top:599px">Domino</div>
<svg class="a" style="left:24px;top:640px" width="32" height="32" viewBox="0 0 32 32"><rect x="1" y="2" width="31" height="25" fill="#203060"/><rect x="2" y="2.5" width="29" height="3" fill="#88b0e8"/><rect x="2" y="6" width="28" height="20" fill="#000"/><text x="4" y="17" font-family="Liberation Mono" font-size="9" font-weight="bold" fill="#fff">C:\_</text><rect x="0" y="21" width="11" height="11" fill="#000"/><rect x="0" y="21" width="10" height="10" fill="#fff"/><path d="M2.8 29Q3 26 6.5 24.8" stroke="#000" stroke-width="1.9" fill="none"/><path d="M4.6 22.6L8.8 23.1L8 27.3Z" fill="#000"/></svg>
<div class="dl" style="left:0px;top:675px">DOS</div>
<svg class="a" style="left:24px;top:716px" width="32" height="32" viewBox="0 0 32 32"><rect x="1" y="1" width="31" height="31" fill="#108a60"/><rect x="1" y="1" width="15" height="31" fill="#009010"/><text x="2.5" y="23" font-family="Liberation Sans" font-size="16" font-weight="bold" fill="#f4fff4" letter-spacing="-.5">ED</text><rect x="0" y="21" width="11" height="11" fill="#000"/><rect x="0" y="21" width="10" height="10" fill="#fff"/><path d="M2.8 29Q3 26 6.5 24.8" stroke="#000" stroke-width="1.9" fill="none"/><path d="M4.6 22.6L8.8 23.1L8 27.3Z" fill="#000"/></svg>
<div class="dl" style="left:0px;top:751px">E_D</div>
<svg class="a" style="left:24px;top:792px" width="32" height="32" viewBox="0 0 32 32"><rect x="1" y="1" width="31" height="31" rx="7" fill="#0a3a78"/><rect x="3" y="3" width="27" height="27" rx="5" fill="#2a88e0"/><rect x="4" y="4" width="25" height="4" rx="2" fill="#90c8f8"/><path d="M7 19L17 12M10 22L20 15M14 25L24 18M18 13L26 8M22 16L28 12M9 15L14 11" stroke="#e8f4ff" stroke-width="2.6"/><rect x="0" y="21" width="11" height="11" fill="#000"/><rect x="0" y="21" width="10" height="10" fill="#fff"/><path d="M2.8 29Q3 26 6.5 24.8" stroke="#000" stroke-width="1.9" fill="none"/><path d="M4.6 22.6L8.8 23.1L8 27.3Z" fill="#000"/></svg>
<div class="dl" style="left:0px;top:827px">FLV Player</div>
<svg class="a" style="left:24px;top:868px" width="32" height="32" viewBox="0 0 32 32"><rect x="2" y="0" width="28" height="31" fill="#000"/><rect x="3" y="1" width="26" height="29" fill="#a0f0f0"/><path d="M5 3.5H14M5 6.5H12M21 3.5H27M21 6.5H27M22 9.5H27M20 27.5H27" stroke="#000" stroke-width="1"/><path d="M0 13Q8 9 20 10L29 13L31 22Q22 25 15 31H8Q7 21 0 17Z" fill="#1010e8"/><path d="M13 8Q17 6 21 4M8 11H25M16.5 5V20M16 12L6 22M17 12L28 19M11 20H22Q21 27 17 30M14 23L10 28" stroke="#000" stroke-width="3.2" fill="none"/><path d="M13 8Q17 6 21 4M8 11H25M16.5 5V20M16 12L6 22M17 12L28 19M11 20H22Q21 27 17 30M14 23L10 28" stroke="#f0f040" stroke-width="1.7" fill="none"/><rect x="0" y="21" width="11" height="11" fill="#000"/><rect x="0" y="21" width="10" height="10" fill="#fff"/><path d="M2.8 29Q3 26 6.5 24.8" stroke="#000" stroke-width="1.9" fill="none"/><path d="M4.6 22.6L8.8 23.1L8 27.3Z" fill="#000"/></svg>
<div class="dl" style="left:0px;top:903px">HIDEMARU</div>
<svg class="a" style="left:24px;top:944px" width="32" height="32" viewBox="0 0 32 32"><circle cx="17" cy="16" r="15.5" fill="#2a2a2a"/><circle cx="17" cy="16" r="14.5" fill="#303030"/><text x="10" y="25" font-family="Liberation Sans" font-size="23" font-weight="bold" fill="#fff">5</text><rect x="0" y="21" width="11" height="11" fill="#000"/><rect x="0" y="21" width="10" height="10" fill="#fff"/><path d="M2.8 29Q3 26 6.5 24.8" stroke="#000" stroke-width="1.9" fill="none"/><path d="M4.6 22.6L8.8 23.1L8 27.3Z" fill="#000"/></svg>
<div class="dl" style="left:0px;top:979px">Max 5.1</div>
<svg class="a" style="left:104px;top:32px" width="32" height="32" viewBox="0 0 32 32"><path d="M7.5 3.5H25.5V31.5H7.5Z" fill="#fff" stroke="#a0a0a0" stroke-width=".8"/><path d="M25.5 4V31.5H8" stroke="#606060" stroke-width="1" fill="none"/><rect x="7" y="1" width="19" height="3" fill="#c8b078"/><path d="M8 2.5H26" stroke="#806040" stroke-width="1" stroke-dasharray="1 1"/><path d="M10 8.5H15M10 11.5H17M10 16.5H23M10 18.5H22M10 20.5H21M10 25.5H15M10 27.5H14" stroke="#7080a0" stroke-width=".8"/></svg>
<div class="dl" style="left:18px;top:67px;width:140px;text-align:right">XBee_memo.t...</div>
<svg class="a" style="left:104px;top:108px" width="32" height="32" viewBox="0 0 32 32"><circle cx="17" cy="15" r="14" fill="#e8782a"/><circle cx="18" cy="13" r="10" fill="#2a70c8"/><circle cx="19" cy="11" r="6" fill="#70c0f0"/><path d="M3 17Q2 6 9 2Q7 8 11 10Q15 9 16 13Q11 15 13 19Q17 24 24 21Q29 18 31 13Q32 27 18 31Q5 31 3 17Z" fill="#e86018"/><path d="M5 18Q6 28 17 29Q26 28 30 19Q27 26 18 27Q9 26 7 18Z" fill="#f8b030"/><rect x="0" y="21" width="11" height="11" fill="#000"/><rect x="0" y="21" width="10" height="10" fill="#fff"/><path d="M2.8 29Q3 26 6.5 24.8" stroke="#000" stroke-width="1.9" fill="none"/><path d="M4.6 22.6L8.8 23.1L8 27.3Z" fill="#000"/></svg>
<div class="dl" style="left:80px;top:143px">Mozilla Firefox</div>
<svg class="a" style="left:104px;top:184px" width="32" height="32" viewBox="0 0 32 32"><rect x="1" y="1" width="30" height="30" fill="#f01010"/><rect x="1" y="12" width="30" height="8" fill="#fff"/><rect x="11" y="1" width="8" height="30" fill="#fff"/><rect x="1" y="14" width="30" height="4" fill="#0a1a8a"/><rect x="13" y="1" width="4" height="30" fill="#0a1a8a"/><rect x="0" y="21" width="11" height="11" fill="#000"/><rect x="0" y="21" width="10" height="10" fill="#fff"/><path d="M2.8 29Q3 26 6.5 24.8" stroke="#000" stroke-width="1.9" fill="none"/><path d="M4.6 22.6L8.8 23.1L8 27.3Z" fill="#000"/></svg>
<div class="dl" style="left:80px;top:219px">MPG2JPG</div>
<svg class="a" style="left:104px;top:260px" width="32" height="32" viewBox="0 0 32 32"><rect x="1" y="0" width="30" height="2" fill="#1030c0"/><rect x="1" y="30" width="30" height="2" fill="#1030c0"/><rect x="1" y="2" width="30" height="28" fill="url(#mssg)"/><rect x="3" y="10" width="27" height="11" fill="#000"/><text x="4" y="19.5" font-family="Liberation Sans" font-size="10" font-weight="bold" fill="#fff" letter-spacing=".5">MSS</text><rect x="0" y="21" width="11" height="11" fill="#000"/><rect x="0" y="21" width="10" height="10" fill="#fff"/><path d="M2.8 29Q3 26 6.5 24.8" stroke="#000" stroke-width="1.9" fill="none"/><path d="M4.6 22.6L8.8 23.1L8 27.3Z" fill="#000"/></svg>
<div class="dl" style="left:80px;top:295px">Music Studio</div>
<div class="dl" style="left:80px;top:307px">Independence</div>
<svg class="a" style="left:104px;top:336px" width="32" height="32" viewBox="0 0 32 32"><rect x="1" y="1" width="30" height="30" fill="#4a4c50"/><circle cx="17" cy="15" r="12" fill="#6a6e78" stroke="#a8acb0" stroke-width="1.5"/><circle cx="17" cy="15" r="9" fill="#304070"/><path d="M12 14Q17 8 22 12Q18 18 14 18Z" fill="#a0b040" opacity=".8"/><rect x="0" y="21" width="11" height="11" fill="#000"/><rect x="0" y="21" width="10" height="10" fill="#fff"/><path d="M2.8 29Q3 26 6.5 24.8" stroke="#000" stroke-width="1.9" fill="none"/><path d="M4.6 22.6L8.8 23.1L8 27.3Z" fill="#000"/></svg>
<div class="dl" style="left:80px;top:371px">musique</div>
<svg class="a" style="left:104px;top:412px" width="32" height="32" viewBox="0 0 32 32"><rect x="1" y="1" width="30" height="30" rx="2" fill="#4a3a2a"/><path d="M14 30L30 12M18 30L30 18M22 31L30 24" stroke="#b0a090" stroke-width=".8"/><circle cx="8" cy="7" r="3" fill="#fff"/><path d="M7 5.5L10 7L7 8.5Z" fill="#4a3a2a"/><circle cx="8" cy="14" r="3" fill="none" stroke="#fff" stroke-width="1.3"/><circle cx="8" cy="14" r="1" fill="#fff"/><path d="M13 19V4H18Q22 4 22 8.5Q22 13 18 13H13" stroke="#fff" stroke-width="1.6" fill="none"/><rect x="0" y="21" width="11" height="11" fill="#000"/><rect x="0" y="21" width="10" height="10" fill="#fff"/><path d="M2.8 29Q3 26 6.5 24.8" stroke="#000" stroke-width="1.9" fill="none"/><path d="M4.6 22.6L8.8 23.1L8 27.3Z" fill="#000"/></svg>
<div class="dl" style="left:80px;top:447px">Processing</div>
<svg class="a" style="left:104px;top:488px" width="32" height="32" viewBox="0 0 32 32"><circle cx="16" cy="14" r="11" fill="none" stroke="#2a8ae8" stroke-width="4.5"/><circle cx="16" cy="14" r="8" fill="#70b8f8" opacity=".5"/><path d="M15 16L21 9" stroke="#fff" stroke-width="2"/><path d="M22 21L28 28" stroke="#2a8ae8" stroke-width="5"/><rect x="0" y="21" width="11" height="11" fill="#000"/><rect x="0" y="21" width="10" height="10" fill="#fff"/><path d="M2.8 29Q3 26 6.5 24.8" stroke="#000" stroke-width="1.9" fill="none"/><path d="M4.6 22.6L8.8 23.1L8 27.3Z" fill="#000"/></svg>
<div class="dl" style="left:80px;top:523px">QuickTime</div>
<div class="dl" style="left:80px;top:535px">Player</div>
<svg class="a" style="left:104px;top:564px" width="32" height="32" viewBox="0 0 32 32"><rect x="1" y="1" width="30" height="30" rx="5" fill="#fff"/><path d="M4 6Q10 2 14 6Q20 4 26 8L22 12Q16 9 8 12Z" fill="#9070c8"/><path d="M6 8L10 4L14 8L8 14" stroke="#d040a0" stroke-width="1.5" fill="none"/><rect x="3" y="14" width="25" height="2" fill="#203080"/><rect x="3" y="18" width="25" height="2" fill="#203080" opacity=".8"/><path d="M22 10Q28 14 26 28Q24 20 20 22" stroke="#2040a0" stroke-width="1.5" fill="none"/><rect x="0" y="21" width="11" height="11" fill="#000"/><rect x="0" y="21" width="10" height="10" fill="#fff"/><path d="M2.8 29Q3 26 6.5 24.8" stroke="#000" stroke-width="1.9" fill="none"/><path d="M4.6 22.6L8.8 23.1L8 27.3Z" fill="#000"/></svg>
<div class="dl" style="left:80px;top:599px">ScanSnap</div>
<div class="dl" style="left:80px;top:611px">Organizer</div>
<svg class="a" style="left:104px;top:640px" width="32" height="32" viewBox="0 0 32 32"><rect x="1" y="1" width="31" height="31" fill="#c8c8c8"/><path d="M1 1H31V10L12 31H1Z" fill="#f4f4f4"/><path d="M2 3L9 11M2 12L7 17" stroke="#000" stroke-width="4"/><path d="M11 1L30 20M19 1L31 13M1 19L12 31" stroke="#000" stroke-width="1"/><path d="M30 8L14 30" stroke="#000" stroke-width="1"/><path d="M21 13V26" stroke="#e01010" stroke-width="2"/><path d="M20 12H27Q30 12 30 16" stroke="#e01010" stroke-width="2.5" fill="none"/><ellipse cx="21" cy="26" rx="4.5" ry="3.5" fill="#e01010"/><rect x="0" y="21" width="11" height="11" fill="#000"/><rect x="0" y="21" width="10" height="10" fill="#fff"/><path d="M2.8 29Q3 26 6.5 24.8" stroke="#000" stroke-width="1.9" fill="none"/><path d="M4.6 22.6L8.8 23.1L8 27.3Z" fill="#000"/></svg>
<div class="dl" style="left:80px;top:675px">STUDIO3</div>
<svg class="a" style="left:104px;top:716px" width="32" height="32" viewBox="0 0 32 32"><path d="M16 2L10 24H22Z" fill="#f08010"/><path d="M13 10H19L20 15H12Z" fill="#fff"/><path d="M11 19H21L22 23H10Z" fill="#fff" opacity=".9"/><path d="M4 24H28L30 30H2Z" fill="#f09010"/><path d="M2 30H30" stroke="#c06000" stroke-width="1"/><rect x="0" y="21" width="11" height="11" fill="#000"/><rect x="0" y="21" width="10" height="10" fill="#fff"/><path d="M2.8 29Q3 26 6.5 24.8" stroke="#000" stroke-width="1.9" fill="none"/><path d="M4.6 22.6L8.8 23.1L8 27.3Z" fill="#000"/></svg>
<div class="dl" style="left:80px;top:751px">VLC media</div>
<div class="dl" style="left:80px;top:763px">player</div>
<svg class="a" style="left:104px;top:792px" width="32" height="32" viewBox="0 0 32 32"><rect x="1" y="1" width="31" height="31" fill="#050505"/><path d="M3 3H30M3 6H30M3 9H14M3 12H11M3 15H10M3 18H9M3 21H9M3 24H9M6 3V28M9 3V28M12 3V12" stroke="#a08060" stroke-width=".5"/><path d="M29 4Q14 7 10 28" stroke="#e8e8e8" stroke-width="1" fill="none"/><path d="M12 31Q12 15 27 8L31 12V31Z" fill="url(#vocg)"/><path d="M13 30Q14 17 26 10M16 31Q17 19 28 13M19 31Q20 22 30 16M23 31Q24 25 31 21M27 31Q28 27 31 26" stroke="#000" stroke-width=".8" stroke-dasharray="1 1" fill="none"/><rect x="0" y="21" width="11" height="11" fill="#000"/><rect x="0" y="21" width="10" height="10" fill="#fff"/><path d="M2.8 29Q3 26 6.5 24.8" stroke="#000" stroke-width="1.9" fill="none"/><path d="M4.6 22.6L8.8 23.1L8 27.3Z" fill="#000"/></svg>
<div class="dl" style="left:80px;top:827px">VOCALOID2</div>
<div class="dl" style="left:80px;top:839px">Editor</div>
<svg class="a" style="left:104px;top:868px" width="32" height="32" viewBox="0 0 32 32"><circle cx="17" cy="15" r="13.5" fill="none" stroke="url(#wmpg)" stroke-width="4"/><circle cx="17" cy="15" r="11.5" fill="#f0f4fa"/><circle cx="17" cy="15" r="9" fill="#b8d0e8"/><circle cx="15" cy="12" r="5" fill="#e8f0f8"/><path d="M13 8L24 15L13 22Z" fill="#1030a8"/><rect x="0" y="21" width="11" height="11" fill="#000"/><rect x="0" y="21" width="10" height="10" fill="#fff"/><path d="M2.8 29Q3 26 6.5 24.8" stroke="#000" stroke-width="1.9" fill="none"/><path d="M4.6 22.6L8.8 23.1L8 27.3Z" fill="#000"/></svg>
<div class="dl" style="left:80px;top:903px">Windows</div>
<div class="dl" style="left:80px;top:915px">Media Player</div>
<svg class="a" style="left:104px;top:944px" width="32" height="32" viewBox="0 0 32 32"><path d="M3 5L9 2H30V12H3Z" fill="#8a30a0"/><path d="M5 4H29V6H5Z" fill="#c070d0"/><path d="M3 12H30V20H3Z" fill="#2040d0"/><path d="M5 13H29V15H5Z" fill="#6080f0"/><path d="M3 20H30V28H3Z" fill="#10a020"/><path d="M5 21H29V23H5Z" fill="#60e060"/><path d="M3 5H9V28H3Z" fill="#e0e0e8"/><path d="M4 10H9M4 18H9M4 26H9" stroke="#707070"/><path d="M10 2L21 13M17 2L11 11" stroke="#d8a840" stroke-width="2"/><rect x="18" y="11" width="6" height="8" fill="#c89838"/><rect x="20" y="13" width="2" height="4" fill="#333"/><rect x="0" y="21" width="11" height="11" fill="#000"/><rect x="0" y="21" width="10" height="10" fill="#fff"/><path d="M2.8 29Q3 26 6.5 24.8" stroke="#000" stroke-width="1.9" fill="none"/><path d="M4.6 22.6L8.8 23.1L8 27.3Z" fill="#000"/></svg>
<div class="dl" style="left:80px;top:979px">WinRAR</div>
<svg class="a" style="left:184px;top:32px" width="32" height="32" viewBox="0 0 32 32"><path d="M7 5L25 0L32 19L13 27Z" fill="#1a28d0"/><path d="M9 6L24 2L26 7L11 11Z" fill="#4a60f0"/><path d="M14 26L32 19L31 22L15 28Z" fill="#101890"/><text x="1" y="20" font-family="Liberation Sans" font-size="14" font-weight="bold" fill="#f0f000" font-style="italic" stroke="#605000" stroke-width=".4" letter-spacing="-.5">TeX</text><rect x="0" y="21" width="11" height="11" fill="#000"/><rect x="0" y="21" width="10" height="10" fill="#fff"/><path d="M2.8 29Q3 26 6.5 24.8" stroke="#000" stroke-width="1.9" fill="none"/><path d="M4.6 22.6L8.8 23.1L8 27.3Z" fill="#000"/></svg>
<div class="dl" style="left:160px;top:67px">WinShell</div>
<svg class="a" style="left:184px;top:108px" width="32" height="32" viewBox="0 0 32 32"><path d="M16 3L19 3L20 8L24 5L27 8L24 12L29 13L29 17L24 18L27 22L24 25L20 22L19 27L15 27L14 22L10 25L7 22L10 18L5 17L5 13L10 12L7 8L10 5L14 8Z" fill="#d8d4cc" stroke="#a8a49c" stroke-width=".6"/><circle cx="17" cy="15" r="4" fill="#a09890"/><circle cx="17" cy="15" r="2" fill="#605850"/><rect x="0" y="21" width="11" height="11" fill="#000"/><rect x="0" y="21" width="10" height="10" fill="#fff"/><path d="M2.8 29Q3 26 6.5 24.8" stroke="#000" stroke-width="1.9" fill="none"/><path d="M4.6 22.6L8.8 23.1L8 27.3Z" fill="#000"/></svg>
<div class="dl" style="left:160px;top:143px">PRO Utility v2</div>
<svg class="a" style="left:184px;top:184px" width="32" height="32" viewBox="0 0 32 32"><rect x="0" y="0" width="32" height="32" fill="#109a30"/><text x="3.5" y="9.5" font-family="Liberation Sans" font-size="9" font-weight="bold" fill="#fff" stroke="#000" stroke-width=".8" paint-order="stroke" textLength="26" lengthAdjust="spacingAndGlyphs">CADLUS</text><text x="8" y="17" font-family="Liberation Sans" font-size="8.5" font-weight="bold" fill="#f0f020">D</text><rect x="5" y="16" width="3" height="1.2" fill="#8f8"/><path d="M18 11.5V16M21 11.5V16M24 11.5V16M27 11.5V16" stroke="#f0fff0" stroke-width="1.6"/><path d="M14 32V20Q14 16 18 16H32V32Z" fill="#000"/><path d="M15 32V20Q15 17 18 17H32V32Z" fill="#8a8690"/><path d="M7.5 19H12M7.5 22H12M7.5 25H12M7.5 28H12" stroke="#e8fff0" stroke-width="1.6"/><rect x="0" y="21" width="11" height="11" fill="#000"/><rect x="0" y="21" width="10" height="10" fill="#fff"/><path d="M2.8 29Q3 26 6.5 24.8" stroke="#000" stroke-width="1.9" fill="none"/><path d="M4.6 22.6L8.8 23.1L8 27.3Z" fill="#000"/></svg>
<div class="dl" style="left:160px;top:219px">CADLUS</div>
<svg class="a" style="left:184px;top:260px" width="32" height="32" viewBox="0 0 32 32"><rect x="0" y="0" width="32" height="32" fill="#109a88"/><text x="3.5" y="9.5" font-family="Liberation Sans" font-size="9" font-weight="bold" fill="#fff" stroke="#000" stroke-width=".8" paint-order="stroke" textLength="26" lengthAdjust="spacingAndGlyphs">CADLUS</text><path d="M18 11.5V16M21 11.5V16M24 11.5V16M27 11.5V16" stroke="#f0fff0" stroke-width="1.6"/><path d="M14 32V20Q14 16 18 16H32V32Z" fill="#000"/><path d="M15 32V20Q15 17 18 17H32V32Z" fill="#8a8690"/><path d="M7.5 19H12M7.5 22H12M7.5 25H12M7.5 28H12" stroke="#e8fff0" stroke-width="1.6"/><rect x="0" y="21" width="11" height="11" fill="#000"/><rect x="0" y="21" width="10" height="10" fill="#fff"/><path d="M2.8 29Q3 26 6.5 24.8" stroke="#000" stroke-width="1.9" fill="none"/><path d="M4.6 22.6L8.8 23.1L8 27.3Z" fill="#000"/></svg>
<div class="dl" style="left:160px;top:295px">CADLUS X</div>
<svg class="a" style="left:184px;top:336px" width="32" height="32" viewBox="0 0 32 32"><rect x="0" y="0" width="32" height="32" fill="#109a30"/><text x="3.5" y="9.5" font-family="Liberation Sans" font-size="9" font-weight="bold" fill="#fff" stroke="#000" stroke-width=".8" paint-order="stroke" textLength="26" lengthAdjust="spacingAndGlyphs">CADLUS</text><path d="M1.5 12H6M4 10.5V18M4 13L1.5 16M4 13L6 15.5M7 11L9.5 13.5L12 11M8 14H11M9.5 14V17.5M7.5 16H11.5M13 11H16M13 13H16M13 15H16M14.5 11V17.5M13 17.5H16" stroke="#a0f0d0" stroke-width="1.1"/><path d="M18 11.5V16M21 11.5V16M24 11.5V16M27 11.5V16" stroke="#f0fff0" stroke-width="1.6"/><path d="M14 32V20Q14 16 18 16H32V32Z" fill="#000"/><path d="M15 32V20Q15 17 18 17H32V32Z" fill="#8a8690"/><path d="M7.5 19H12M7.5 22H12M7.5 25H12M7.5 28H12" stroke="#e8fff0" stroke-width="1.6"/><rect x="0" y="21" width="11" height="11" fill="#000"/><rect x="0" y="21" width="10" height="10" fill="#fff"/><path d="M2.8 29Q3 26 6.5 24.8" stroke="#000" stroke-width="1.9" fill="none"/><path d="M4.6 22.6L8.8 23.1L8 27.3Z" fill="#000"/></svg>
<div class="dl" style="left:160px;top:371px">CADLUS</div>
<div class="dl" style="left:160px;top:383px">Viewer</div>
<svg class="a" style="left:184px;top:412px" width="32" height="32" viewBox="0 0 32 32"><circle cx="17" cy="15" r="14" fill="#383838"/><circle cx="17" cy="15" r="12" fill="#686868"/><path d="M17 15L26 6" stroke="#d02020" stroke-width="1.6"/><path d="M27 9Q30 13 29 18" stroke="#d02020" stroke-width="1.5" fill="none"/><circle cx="17" cy="15" r="1.5" fill="#c00"/><rect x="0" y="21" width="11" height="11" fill="#000"/><rect x="0" y="21" width="10" height="10" fill="#fff"/><path d="M2.8 29Q3 26 6.5 24.8" stroke="#000" stroke-width="1.9" fill="none"/><path d="M4.6 22.6L8.8 23.1L8 27.3Z" fill="#000"/></svg>
<div class="dl" style="left:160px;top:447px">MemMeter.exe</div>
<!-- GADGET -->
<svg class="a" style="left:13px;top:34px" width="100" height="100" viewBox="0 0 100 100"><defs><pattern id="noise" width="4" height="4" patternUnits="userSpaceOnUse"><rect width="4" height="4" fill="#404040"/><rect x="0" y="0" width="1" height="1" fill="#5a5a5a"/><rect x="2" y="1" width="1" height="1" fill="#2c2c2c"/><rect x="1" y="3" width="1" height="1" fill="#505050"/><rect x="3" y="2" width="1" height="1" fill="#333"/></pattern></defs><circle cx="50" cy="50" r="48.5" fill="#4a4a4a" stroke="#222" stroke-width=".8"/><circle cx="50" cy="50" r="45" fill="url(#noise)" stroke="#1a1a1a" stroke-width="1"/><line x1="50.0" y1="94.0" x2="50.0" y2="89.0" stroke="#ddd" stroke-width="1.6"/><line x1="45.9" y1="93.8" x2="46.1" y2="90.8" stroke="#ddd" stroke-width="0.9"/><line x1="41.8" y1="93.2" x2="42.3" y2="90.3" stroke="#ddd" stroke-width="0.9"/><line x1="37.7" y1="92.3" x2="38.6" y2="89.4" stroke="#ddd" stroke-width="0.9"/><line x1="33.8" y1="90.9" x2="34.9" y2="88.1" stroke="#ddd" stroke-width="0.9"/><line x1="30.0" y1="89.2" x2="32.3" y2="84.7" stroke="#ddd" stroke-width="1.6"/><line x1="26.4" y1="87.2" x2="28.0" y2="84.6" stroke="#ddd" stroke-width="0.9"/><line x1="23.0" y1="84.8" x2="24.9" y2="82.4" stroke="#ddd" stroke-width="0.9"/><line x1="19.9" y1="82.1" x2="21.9" y2="79.9" stroke="#ddd" stroke-width="0.9"/><line x1="17.0" y1="79.1" x2="19.2" y2="77.1" stroke="#ddd" stroke-width="0.9"/><line x1="14.4" y1="75.9" x2="18.4" y2="72.9" stroke="#ddd" stroke-width="1.6"/><line x1="12.1" y1="72.4" x2="14.7" y2="70.9" stroke="#ddd" stroke-width="0.9"/><line x1="10.2" y1="68.7" x2="12.9" y2="67.5" stroke="#ddd" stroke-width="0.9"/><line x1="8.6" y1="64.9" x2="11.4" y2="63.9" stroke="#ddd" stroke-width="0.9"/><line x1="7.4" y1="60.9" x2="10.3" y2="60.2" stroke="#ddd" stroke-width="0.9"/><line x1="6.5" y1="56.9" x2="11.5" y2="56.1" stroke="#ddd" stroke-width="1.6"/><line x1="6.1" y1="52.8" x2="9.1" y2="52.6" stroke="#ddd" stroke-width="0.9"/><line x1="6.0" y1="48.6" x2="9.0" y2="48.7" stroke="#ddd" stroke-width="0.9"/><line x1="6.3" y1="44.5" x2="9.3" y2="44.9" stroke="#ddd" stroke-width="0.9"/><line x1="7.1" y1="40.4" x2="10.0" y2="41.1" stroke="#ddd" stroke-width="0.9"/><line x1="8.2" y1="36.4" x2="12.9" y2="37.9" stroke="#ddd" stroke-width="1.6"/><line x1="9.6" y1="32.5" x2="12.4" y2="33.7" stroke="#ddd" stroke-width="0.9"/><line x1="11.4" y1="28.8" x2="14.1" y2="30.2" stroke="#ddd" stroke-width="0.9"/><line x1="13.6" y1="25.3" x2="16.1" y2="27.0" stroke="#ddd" stroke-width="0.9"/><line x1="16.1" y1="22.0" x2="18.4" y2="23.9" stroke="#ddd" stroke-width="0.9"/><line x1="18.9" y1="18.9" x2="22.4" y2="22.4" stroke="#ddd" stroke-width="1.6"/><line x1="22.0" y1="16.1" x2="23.9" y2="18.4" stroke="#ddd" stroke-width="0.9"/><line x1="25.3" y1="13.6" x2="27.0" y2="16.1" stroke="#ddd" stroke-width="0.9"/><line x1="28.8" y1="11.4" x2="30.2" y2="14.1" stroke="#ddd" stroke-width="0.9"/><line x1="32.5" y1="9.6" x2="33.7" y2="12.4" stroke="#ddd" stroke-width="0.9"/><line x1="36.4" y1="8.2" x2="37.9" y2="12.9" stroke="#ddd" stroke-width="1.6"/><line x1="40.4" y1="7.1" x2="41.1" y2="10.0" stroke="#ddd" stroke-width="0.9"/><line x1="44.5" y1="6.3" x2="44.9" y2="9.3" stroke="#ddd" stroke-width="0.9"/><line x1="48.6" y1="6.0" x2="48.7" y2="9.0" stroke="#ddd" stroke-width="0.9"/><line x1="52.8" y1="6.1" x2="52.6" y2="9.1" stroke="#ddd" stroke-width="0.9"/><line x1="56.9" y1="6.5" x2="56.1" y2="11.5" stroke="#ddd" stroke-width="1.6"/><line x1="60.9" y1="7.4" x2="60.2" y2="10.3" stroke="#ddd" stroke-width="0.9"/><line x1="64.9" y1="8.6" x2="63.9" y2="11.4" stroke="#ddd" stroke-width="0.9"/><line x1="68.7" y1="10.2" x2="67.5" y2="12.9" stroke="#ddd" stroke-width="0.9"/><line x1="72.4" y1="12.1" x2="70.9" y2="14.7" stroke="#ddd" stroke-width="0.9"/><line x1="75.9" y1="14.4" x2="72.9" y2="18.4" stroke="#ddd" stroke-width="1.6"/><line x1="79.1" y1="17.0" x2="77.1" y2="19.2" stroke="#ddd" stroke-width="0.9"/><line x1="82.1" y1="19.9" x2="79.9" y2="21.9" stroke="#ddd" stroke-width="0.9"/><line x1="84.8" y1="23.0" x2="82.4" y2="24.9" stroke="#ddd" stroke-width="0.9"/><line x1="87.2" y1="26.4" x2="84.6" y2="28.0" stroke="#ddd" stroke-width="0.9"/><line x1="89.2" y1="30.0" x2="84.7" y2="32.3" stroke="#ddd" stroke-width="1.6"/><line x1="90.9" y1="33.8" x2="88.1" y2="34.9" stroke="#ddd" stroke-width="0.9"/><line x1="92.3" y1="37.7" x2="89.4" y2="38.6" stroke="#ddd" stroke-width="0.9"/><line x1="93.2" y1="41.8" x2="90.3" y2="42.3" stroke="#ddd" stroke-width="0.9"/><line x1="93.8" y1="45.9" x2="90.8" y2="46.1" stroke="#ddd" stroke-width="0.9"/><line x1="94.0" y1="50.0" x2="89.0" y2="50.0" stroke="#ddd" stroke-width="1.6"/><path d="M84.4 25.8A42 42 0 0 1 92.0 50.0" stroke="#d01010" stroke-width="4.5" fill="none"/><text x="50.0" y="86.7" text-anchor="middle" font-family="Liberation Sans" font-weight="bold" font-size="13" fill="#f0f0f0">0</text><text x="35.5" y="83.2" text-anchor="middle" font-family="Liberation Sans" font-weight="bold" font-size="13" fill="#f0f0f0">1</text><text x="24.1" y="73.5" text-anchor="middle" font-family="Liberation Sans" font-weight="bold" font-size="13" fill="#f0f0f0">2</text><text x="18.4" y="59.7" text-anchor="middle" font-family="Liberation Sans" font-weight="bold" font-size="13" fill="#f0f0f0">3</text><text x="19.6" y="44.8" text-anchor="middle" font-family="Liberation Sans" font-weight="bold" font-size="13" fill="#f0f0f0">4</text><text x="27.4" y="32.1" text-anchor="middle" font-family="Liberation Sans" font-weight="bold" font-size="13" fill="#f0f0f0">5</text><text x="40.1" y="24.3" text-anchor="middle" font-family="Liberation Sans" font-weight="bold" font-size="13" fill="#f0f0f0">6</text><text x="55.0" y="23.1" text-anchor="middle" font-family="Liberation Sans" font-weight="bold" font-size="13" fill="#f0f0f0">7</text><text x="68.8" y="28.8" text-anchor="middle" font-family="Liberation Sans" font-weight="bold" font-size="13" fill="#f0f0f0">8</text><text x="78.5" y="40.2" text-anchor="middle" font-family="Liberation Sans" font-weight="bold" font-size="13" fill="#f0f0f0">9</text><text x="83.0" y="54.7" text-anchor="middle" font-family="Liberation Sans" font-weight="bold" font-size="13" fill="#f0f0f0">10</text><text x="51" y="43" text-anchor="middle" font-family="Liberation Sans" font-size="9" fill="#d8d8d8">×1000rpm</text><circle cx="56" cy="64.5" r="3" fill="#e01818"/><text x="60" y="67.8" font-family="Liberation Sans" font-size="8" font-weight="bold" fill="#d0d0d0" textLength="32">WARNING</text><circle cx="50" cy="51" r="5.5" fill="#5a5a5a"/><rect x="50" y="49" width="44" height="4" fill="#d81010"/></svg>

<!-- EDITOR WINDOW -->
<div class="a" style="left:295px;top:65px;width:406px;height:881px;background:#d4d0c8;border:1px solid;border-color:#d4d0c8 #404040 #404040 #d4d0c8;box-shadow:inset 1px 1px #fff,inset -1px -1px #808080"></div>
<div class="tb inact" style="left:299px;top:69px;width:398px"></div>
<svg class="a" style="left:301px;top:70px" width="16" height="16" viewBox="0 0 16 16"><path d="M2.5 .5H10.5L13.5 3.5V15.5H2.5Z" fill="#fff" stroke="#000"/><rect x="1" y="3" width="6" height="7" fill="#0a1a80"/><rect x="2" y="5" width="3" height="2" fill="#8fe"/></svg>
<div class="cap" style="left:646px;top:71px"><div class="a" style="left:3px;top:8px;width:6px;height:2px;background:#000"></div></div>
<div class="cap" style="left:662px;top:71px"><div class="a" style="left:2px;top:1px;width:9px;height:9px;border:1px solid #000;border-top-width:2px"></div></div>
<div class="cap" style="left:680px;top:71px"><svg class="a" style="left:3px;top:2px" width="8" height="7"><path d="M0 0L8 7M8 0L0 7M1 0L8 6M7 0L0 6" stroke="#000" stroke-width="1.3"/></svg></div>
<div class="a" style="left:299px;top:107px;width:398px;height:836px;border:1px solid;border-color:#808080 #fff #fff #808080;box-shadow:inset 1px 1px #404040,inset -1px -1px #d4d0c8;background:#000"></div>
<svg class="a" style="left:0;top:0" width="700" height="125"><path d="M309 118.5H680M309.5 109V118M315.5 115V118M321.5 115V118M327.5 115V118M333.5 115V118M339.5 112V118M345.5 115V118M351.5 115V118M357.5 115V118M363.5 115V118M369.5 109V118M375.5 115V118M381.5 115V118M387.5 115V118M393.5 115V118M399.5 112V118M405.5 115V118M411.5 115V118M417.5 115V118M423.5 115V118M429.5 109V118M435.5 115V118M441.5 115V118M447.5 115V118M453.5 115V118M459.5 112V118M465.5 115V118M471.5 115V118M477.5 115V118M483.5 115V118M489.5 109V118M495.5 115V118M501.5 115V118M507.5 115V118M513.5 115V118M519.5 112V118M525.5 115V118M531.5 115V118M537.5 115V118M543.5 115V118M549.5 109V118M555.5 115V118M561.5 115V118M567.5 115V118M573.5 115V118M579.5 112V118M585.5 115V118M591.5 115V118M597.5 115V118M603.5 115V118M609.5 109V118M615.5 115V118M621.5 115V118M627.5 115V118M633.5 115V118M639.5 112V118M645.5 115V118M651.5 115V118M657.5 115V118M663.5 115V118M669.5 109V118M675.5 115V118" stroke="#fff" stroke-width="1" fill="none"/></svg>
<!-- scrollbar -->
<div class="a" style="left:680px;top:109px;width:16px;height:832px;background-color:#ece9e2;background-image:repeating-conic-gradient(#fff 0 25%,#d4d0c8 0 50%);background-size:2px 2px"></div>
<div class="btn" style="left:680px;top:109px;width:16px;height:14px"><svg class="a" style="left:3px;top:4px" width="8" height="5"><path d="M4 0L8 4H0Z" fill="#000"/></svg></div>
<div class="btn" style="left:680px;top:123px;width:16px;height:320px"></div>
<div class="btn" style="left:680px;top:926px;width:16px;height:15px"><svg class="a" style="left:3px;top:4px" width="8" height="5"><path d="M0 0H8L4 4Z" fill="#000"/></svg></div>
<svg class="a" style="left:0;top:0" width="700" height="950" font-family="Liberation Mono" font-size="13" xml:space="preserve"><text x="309" y="131" textLength="66" lengthAdjust="spacingAndGlyphs" fill="#fff">port = COM9</text><text x="309" y="144" textLength="192" lengthAdjust="spacingAndGlyphs" fill="#fff">new XBee communication = 9600 !!</text><text x="309" y="170" textLength="222" lengthAdjust="spacingAndGlyphs" fill="#fff">=====================================</text><text x="309" y="183" textLength="222" lengthAdjust="spacingAndGlyphs" fill="#fff">=====================================</text><text x="309" y="196" textLength="222" lengthAdjust="spacingAndGlyphs" fill="#fff">=====================================</text><text x="309" y="209" textLength="222" lengthAdjust="spacingAndGlyphs" fill="#fff">=====================================</text><text x="309" y="222" textLength="222" lengthAdjust="spacingAndGlyphs" fill="#fff">=====================================</text><text x="309" y="235" textLength="54" lengthAdjust="spacingAndGlyphs" fill="#50e0d0">XBee [E2]</text><text x="309" y="248" textLength="102" lengthAdjust="spacingAndGlyphs" fill="#fff">Modem type = XB24</text><text x="309" y="261" textLength="138" lengthAdjust="spacingAndGlyphs" fill="#fff">firmware version = 10EC</text><text x="309" y="274" textLength="84" lengthAdjust="spacingAndGlyphs" fill="#fff">13A200408D29E2</text><text x="309" y="287" textLength="42" lengthAdjust="spacingAndGlyphs" fill="#fff">CH = 0B</text><text x="309" y="300" textLength="54" lengthAdjust="spacingAndGlyphs" fill="#fff">ID = ABCD</text><text x="309" y="313" textLength="36" lengthAdjust="spacingAndGlyphs" fill="#fff">DH = 0</text><text x="309" y="326" textLength="36" lengthAdjust="spacingAndGlyphs" fill="#fff">DL = 7</text><text x="309" y="339" textLength="36" lengthAdjust="spacingAndGlyphs" fill="#fff">MY = 8</text><text x="309" y="352" textLength="60" lengthAdjust="spacingAndGlyphs" fill="#fff">BD = 38400</text><text x="309" y="365" textLength="54" lengthAdjust="spacingAndGlyphs" fill="#fff">NO PARITY</text><text x="309" y="378" textLength="72" lengthAdjust="spacingAndGlyphs" fill="#fff">Timeout = 80</text><text x="309" y="391" textLength="72" lengthAdjust="spacingAndGlyphs" fill="#fff">API DISABLED</text><text x="309" y="404" textLength="222" lengthAdjust="spacingAndGlyphs" fill="#fff">=====================================</text><text x="309" y="417" textLength="54" lengthAdjust="spacingAndGlyphs" fill="#fff">XBee [E1]</text><text x="309" y="430" textLength="102" lengthAdjust="spacingAndGlyphs" fill="#fff">Modem type = XB24</text><text x="309" y="443" textLength="138" lengthAdjust="spacingAndGlyphs" fill="#fff">firmware version = 10EC</text><text x="309" y="456" textLength="84" lengthAdjust="spacingAndGlyphs" fill="#fff">13A2004081E1CB</text><text x="309" y="469" textLength="42" lengthAdjust="spacingAndGlyphs" fill="#fff">CH = 0B</text><text x="309" y="482" textLength="54" lengthAdjust="spacingAndGlyphs" fill="#fff">ID = ABCD</text><text x="309" y="495" textLength="36" lengthAdjust="spacingAndGlyphs" fill="#fff">DH = 0</text><text x="309" y="508" textLength="36" lengthAdjust="spacingAndGlyphs" fill="#fff">DL = 8</text><text x="309" y="521" textLength="36" lengthAdjust="spacingAndGlyphs" fill="#fff">MY = 7</text><text x="309" y="534" textLength="60" lengthAdjust="spacingAndGlyphs" fill="#fff">BD = 38400</text><text x="309" y="547" textLength="54" lengthAdjust="spacingAndGlyphs" fill="#fff">NO PARITY</text><text x="309" y="560" textLength="72" lengthAdjust="spacingAndGlyphs" fill="#fff">Timeout = 80</text><text x="309" y="573" textLength="72" lengthAdjust="spacingAndGlyphs" fill="#fff">API DISABLED</text><text x="309" y="586" textLength="222" lengthAdjust="spacingAndGlyphs" fill="#fff">=====================================</text><text x="309" y="599" textLength="54" lengthAdjust="spacingAndGlyphs" fill="#fff">XBee [D2]</text><text x="309" y="612" textLength="102" lengthAdjust="spacingAndGlyphs" fill="#fff">Modem type = XB24</text><text x="309" y="625" textLength="138" lengthAdjust="spacingAndGlyphs" fill="#fff">firmware version = 10EC</text><text x="309" y="638" textLength="84" lengthAdjust="spacingAndGlyphs" fill="#fff">13A2004081E696</text><text x="309" y="651" textLength="42" lengthAdjust="spacingAndGlyphs" fill="#fff">CH = 0B</text><text x="309" y="664" textLength="54" lengthAdjust="spacingAndGlyphs" fill="#fff">ID = ABCD</text><text x="309" y="677" textLength="36" lengthAdjust="spacingAndGlyphs" fill="#fff">DH = 0</text><text x="309" y="690" textLength="36" lengthAdjust="spacingAndGlyphs" fill="#fff">DL = 5</text><text x="309" y="703" textLength="36" lengthAdjust="spacingAndGlyphs" fill="#fff">MY = 6</text><text x="309" y="716" textLength="60" lengthAdjust="spacingAndGlyphs" fill="#fff">BD = 19200</text><text x="309" y="729" textLength="54" lengthAdjust="spacingAndGlyphs" fill="#fff">NO PARITY</text><text x="309" y="742" textLength="72" lengthAdjust="spacingAndGlyphs" fill="#fff">Timeout = 80</text><text x="309" y="755" textLength="72" lengthAdjust="spacingAndGlyphs" fill="#fff">API DISABLED</text><text x="309" y="768" textLength="222" lengthAdjust="spacingAndGlyphs" fill="#fff">=====================================</text><text x="309" y="781" textLength="54" lengthAdjust="spacingAndGlyphs" fill="#fff">XBee [D1]</text><text x="309" y="794" textLength="102" lengthAdjust="spacingAndGlyphs" fill="#fff">Modem type = XB24</text><text x="309" y="807" textLength="138" lengthAdjust="spacingAndGlyphs" fill="#fff">firmware version = 10EC</text><text x="309" y="820" textLength="84" lengthAdjust="spacingAndGlyphs" fill="#fff">13A2004081E1B6</text><text x="309" y="833" textLength="42" lengthAdjust="spacingAndGlyphs" fill="#fff">CH = 0B</text><text x="309" y="846" textLength="54" lengthAdjust="spacingAndGlyphs" fill="#fff">ID = ABCD</text><text x="309" y="859" textLength="36" lengthAdjust="spacingAndGlyphs" fill="#fff">DH = 0</text><text x="309" y="872" textLength="36" lengthAdjust="spacingAndGlyphs" fill="#fff">DL = 6</text><text x="309" y="885" textLength="36" lengthAdjust="spacingAndGlyphs" fill="#fff">MY = 5</text><text x="309" y="898" textLength="60" lengthAdjust="spacingAndGlyphs" fill="#fff">BD = 19200</text><text x="309" y="911" textLength="54" lengthAdjust="spacingAndGlyphs" fill="#fff">NO PARITY</text><text x="309" y="924" textLength="72" lengthAdjust="spacingAndGlyphs" fill="#fff">Timeout = 80</text><text x="309" y="937" textLength="72" lengthAdjust="spacingAndGlyphs" fill="#fff">API DISABLED</text></svg>
<svg class="a" style="left:0;top:0" width="700" height="950"><path d="M377.5 122.5V129.5M375.5 126.5L377.5 129L379.5 126.5M503.5 135.5V142.5M501.5 139.5L503.5 142L505.5 139.5M311.5 148.5V155.5M309.5 152.5L311.5 155L313.5 152.5M533.5 161.5V168.5M531.5 165.5L533.5 168L535.5 165.5M533.5 174.5V181.5M531.5 178.5L533.5 181L535.5 178.5M533.5 187.5V194.5M531.5 191.5L533.5 194L535.5 191.5M533.5 200.5V207.5M531.5 204.5L533.5 207L535.5 204.5M533.5 213.5V220.5M531.5 217.5L533.5 220L535.5 217.5M365.5 226.5V233.5M363.5 230.5L365.5 233L367.5 230.5M413.5 239.5V246.5M411.5 243.5L413.5 246L415.5 243.5M449.5 252.5V259.5M447.5 256.5L449.5 259L451.5 256.5M395.5 265.5V272.5M393.5 269.5L395.5 272L397.5 269.5M353.5 278.5V285.5M351.5 282.5L353.5 285L355.5 282.5M365.5 291.5V298.5M363.5 295.5L365.5 298L367.5 295.5M347.5 304.5V311.5M345.5 308.5L347.5 311L349.5 308.5M347.5 317.5V324.5M345.5 321.5L347.5 324L349.5 321.5M347.5 330.5V337.5M345.5 334.5L347.5 337L349.5 334.5M371.5 343.5V350.5M369.5 347.5L371.5 350L373.5 347.5M365.5 356.5V363.5M363.5 360.5L365.5 363L367.5 360.5M383.5 369.5V376.5M381.5 373.5L383.5 376L385.5 373.5M383.5 382.5V389.5M381.5 386.5L383.5 389L385.5 386.5M533.5 395.5V402.5M531.5 399.5L533.5 402L535.5 399.5M365.5 408.5V415.5M363.5 412.5L365.5 415L367.5 412.5M413.5 421.5V428.5M411.5 425.5L413.5 428L415.5 425.5M449.5 434.5V441.5M447.5 438.5L449.5 441L451.5 438.5M395.5 447.5V454.5M393.5 451.5L395.5 454L397.5 451.5M353.5 460.5V467.5M351.5 464.5L353.5 467L355.5 464.5M365.5 473.5V480.5M363.5 477.5L365.5 480L367.5 477.5M347.5 486.5V493.5M345.5 490.5L347.5 493L349.5 490.5M347.5 499.5V506.5M345.5 503.5L347.5 506L349.5 503.5M347.5 512.5V519.5M345.5 516.5L347.5 519L349.5 516.5M371.5 525.5V532.5M369.5 529.5L371.5 532L373.5 529.5M365.5 538.5V545.5M363.5 542.5L365.5 545L367.5 542.5M383.5 551.5V558.5M381.5 555.5L383.5 558L385.5 555.5M383.5 564.5V571.5M381.5 568.5L383.5 571L385.5 568.5M533.5 577.5V584.5M531.5 581.5L533.5 584L535.5 581.5M365.5 590.5V597.5M363.5 594.5L365.5 597L367.5 594.5M413.5 603.5V610.5M411.5 607.5L413.5 610L415.5 607.5M449.5 616.5V623.5M447.5 620.5L449.5 623L451.5 620.5M395.5 629.5V636.5M393.5 633.5L395.5 636L397.5 633.5M353.5 642.5V649.5M351.5 646.5L353.5 649L355.5 646.5M365.5 655.5V662.5M363.5 659.5L365.5 662L367.5 659.5M347.5 668.5V675.5M345.5 672.5L347.5 675L349.5 672.5M347.5 681.5V688.5M345.5 685.5L347.5 688L349.5 685.5M347.5 694.5V701.5M345.5 698.5L347.5 701L349.5 698.5M371.5 707.5V714.5M369.5 711.5L371.5 714L373.5 711.5M365.5 720.5V727.5M363.5 724.5L365.5 727L367.5 724.5M383.5 733.5V740.5M381.5 737.5L383.5 740L385.5 737.5M383.5 746.5V753.5M381.5 750.5L383.5 753L385.5 750.5M533.5 759.5V766.5M531.5 763.5L533.5 766L535.5 763.5M365.5 772.5V779.5M363.5 776.5L365.5 779L367.5 776.5M413.5 785.5V792.5M411.5 789.5L413.5 792L415.5 789.5M449.5 798.5V805.5M447.5 802.5L449.5 805L451.5 802.5M395.5 811.5V818.5M393.5 815.5L395.5 818L397.5 815.5M353.5 824.5V831.5M351.5 828.5L353.5 831L355.5 828.5M365.5 837.5V844.5M363.5 841.5L365.5 844L367.5 841.5M347.5 850.5V857.5M345.5 854.5L347.5 857L349.5 854.5M347.5 863.5V870.5M345.5 867.5L347.5 870L349.5 867.5M347.5 876.5V883.5M345.5 880.5L347.5 883L349.5 880.5M371.5 889.5V896.5M369.5 893.5L371.5 896L373.5 893.5M365.5 902.5V909.5M363.5 906.5L365.5 909L367.5 906.5M383.5 915.5V922.5M381.5 919.5L383.5 922L385.5 919.5M383.5 928.5V935.5M381.5 932.5L383.5 935L385.5 932.5" stroke="#e0203a" stroke-width="1.2" fill="none"/></svg>

<!-- XCTU WINDOW -->
<div class="a" style="left:738px;top:184px;width:456px;height:586px;background:#d4d0c8;border:1px solid;border-color:#d4d0c8 #404040 #404040 #d4d0c8;box-shadow:inset 1px 1px #fff,inset -1px -1px #808080"></div>
<div class="tb inact" style="left:741px;top:187px;width:450px"></div>
<svg class="a" style="left:743px;top:188px" width="16" height="16" viewBox="0 0 16 16"><rect x="0" y="1" width="7" height="10" fill="#000"/><rect x="2" y="3" width="3" height="3" fill="#b8e8b0"/><rect x="8" y="2" width="7" height="9" fill="#1a8a1a"/><rect x="9" y="3" width="5" height="4" fill="#8ef08e"/><rect x="1" y="13" width="4" height="1" fill="#ddd"/><rect x="10" y="13" width="4" height="1" fill="#ddd"/></svg>
<div class="lbl" style="left:761px;top:190px;color:#d4d0c8;font-weight:bold;font-size:13px;line-height:13px">X-CTU</div>
<div class="cap" style="left:1139px;top:189px"><div class="a" style="left:3px;top:8px;width:6px;height:2px;background:#000"></div></div>
<div class="cap" style="left:1155px;top:189px"><div class="a" style="left:3px;top:1px;width:9px;height:9px;border:1px solid #808080;border-top-width:2px;box-shadow:1px 1px #fff"></div></div>
<div class="cap" style="left:1173px;top:189px"><svg class="a" style="left:3px;top:2px" width="8" height="7"><path d="M0 0L8 7M8 0L0 7M1 0L8 6M7 0L0 6" stroke="#000" stroke-width="1.3"/></svg></div>
<div class="lbl" style="left:749px;top:207px;color:#8a8a8a;text-shadow:1px 1px #fff">About</div>
<!-- outer tab panel -->
<div class="a" style="left:741px;top:245px;width:450px;height:503px;border:1px solid;border-color:#fff #404040 #404040 #fff;box-shadow:inset -1px -1px #808080"></div>
<div class="a" style="left:812px;top:227px;width:67px;height:19px;border:1px solid;border-bottom:0;border-color:#fff #404040 #404040 #fff;box-shadow:inset -1px 0 #808080;border-radius:2px 2px 0 0"></div>
<div class="a" style="left:878px;top:227px;width:53px;height:19px;border:1px solid;border-bottom:0;border-color:#fff #404040 #404040 #fff;box-shadow:inset -1px 0 #808080;border-radius:2px 2px 0 0"></div>
<div class="a" style="left:930px;top:227px;width:113px;height:19px;border:1px solid;border-bottom:0;border-color:#fff #404040 #404040 #fff;box-shadow:inset -1px 0 #808080;border-radius:2px 2px 0 0"></div>
<div class="a" style="left:742px;top:225px;width:71px;height:22px;background:#d4d0c8;border:1px solid;border-bottom:0;border-color:#fff #404040 #404040 #fff;box-shadow:inset -1px 0 #808080;border-radius:2px 2px 0 0"></div>
<div class="lbl" style="left:749px;top:229px">PC Settings</div>
<div class="lbl" style="left:817px;top:231px">Range Test</div>
<div class="lbl" style="left:884px;top:231px">Terminal</div>
<div class="lbl" style="left:937px;top:231px">Modem Configuration</div>
<!-- com port group -->
<div class="a" style="left:745px;top:259px;width:437px;height:203px;border:1px solid;border-color:#808080 #fff #fff #808080;box-shadow:inset 1px 1px #fff,inset -1px -1px #808080"></div>
<div class="lbl" style="left:751px;top:253px;background:#d4d0c8;padding:0 3px">Com Port Setup</div>
<div class="lbl" style="left:751px;top:271px">Select Com Port</div>
<div class="sunk" style="left:752px;top:284px;width:257px;height:171px"></div>
<div class="a" style="left:754px;top:286px;width:253px;height:13px;background:#0a246a"></div>
<div class="lbl" style="left:756px;top:286px;color:#fff">Silicon Labs CP210x USB to ...(COM9)</div>
<div class="lbl" style="left:1021px;top:288px">Baud</div>
<div class="lbl" style="left:1021px;top:317px">Flow Control</div>
<div class="lbl" style="left:1021px;top:350px">Data Bits</div>
<div class="lbl" style="left:1021px;top:379px">Parity</div>
<div class="lbl" style="left:1021px;top:405px">Stop Bits</div>
<div class="sunk" style="left:1087px;top:285px;width:91px;height:20px"><div class="lbl" style="left:2px;top:3px">9600</div><div class="btn" style="right:1px;top:1px;width:16px;height:16px"><svg class="a" style="left:3px;top:5px" width="8" height="5"><path d="M0 0H8L4 4Z"/></svg></div></div>
<div class="sunk" style="left:1087px;top:313px;width:91px;height:20px"><div class="lbl" style="left:2px;top:3px">NONE</div><div class="btn" style="right:1px;top:1px;width:16px;height:16px"><svg class="a" style="left:3px;top:5px" width="8" height="5"><path d="M0 0H8L4 4Z"/></svg></div></div>
<div class="sunk" style="left:1106px;top:342px;width:71px;height:20px"><div class="lbl" style="left:2px;top:3px">8</div><div class="btn" style="right:1px;top:1px;width:16px;height:16px"><svg class="a" style="left:3px;top:5px" width="8" height="5"><path d="M0 0H8L4 4Z"/></svg></div></div>
<div class="sunk" style="left:1106px;top:371px;width:71px;height:20px"><div class="lbl" style="left:2px;top:3px">NONE</div><div class="btn" style="right:1px;top:1px;width:16px;height:16px"><svg class="a" style="left:3px;top:5px" width="8" height="5"><path d="M0 0H8L4 4Z"/></svg></div></div>
<div class="sunk" style="left:1106px;top:400px;width:71px;height:20px"><div class="lbl" style="left:2px;top:3px">1</div><div class="btn" style="right:1px;top:1px;width:16px;height:16px"><svg class="a" style="left:3px;top:5px" width="8" height="5"><path d="M0 0H8L4 4Z"/></svg></div></div>
<div class="btn" style="left:1019px;top:432px;width:157px;height:24px;line-height:20px">Test&nbsp; / Query</div>
<!-- inner tabs -->
<div class="a" style="left:747px;top:483px;width:435px;height:263px;border:1px solid;border-color:#fff #404040 #404040 #fff;box-shadow:inset -1px -1px #808080"></div>
<div class="a" style="left:814px;top:465px;width:85px;height:19px;border:1px solid;border-bottom:0;border-color:#fff #404040 #404040 #fff;box-shadow:inset -1px 0 #808080"></div>
<div class="a" style="left:898px;top:465px;width:97px;height:19px;border:1px solid;border-bottom:0;border-color:#fff #404040 #404040 #fff;box-shadow:inset -1px 0 #808080"></div>
<div class="lbl" style="left:819px;top:469px">User Com Ports</div>
<div class="lbl" style="left:904px;top:469px">Network Interface</div>
<!-- API group -->
<div class="a" style="left:754px;top:498px;width:204px;height:54px;border:1px solid;border-color:#808080 #fff #fff #808080;box-shadow:inset 1px 1px #fff,inset -1px -1px #808080"></div>
<div class="lbl" style="left:817px;top:509px">API</div>
<div class="a" style="left:763px;top:532px;width:13px;height:13px;border:1px solid;border-color:#808080 #fff #fff #808080;box-shadow:inset 1px 1px #404040,inset -1px -1px #d4d0c8;background:#d4d0c8"></div>
<div class="lbl" style="left:781px;top:532px;color:#8a8a8a;text-shadow:1px 1px #fff">Use escape characters (ATAP = 2)</div>
<!-- reponse timeout -->
<div class="a" style="left:968px;top:498px;width:203px;height:55px;border:1px solid;border-color:#808080 #fff #fff #808080;box-shadow:inset 1px 1px #fff,inset -1px -1px #808080"></div>
<div class="lbl" style="left:974px;top:492px;background:#d4d0c8;padding:0 3px">Reponse Timeout</div>
<div class="lbl" style="left:975px;top:522px">Timeout</div>
<div class="sunk" style="left:1072px;top:514px;width:95px;height:22px;text-align:center"><div style="line-height:17px">1000</div></div>
<!-- AT command -->
<div class="a" style="left:754px;top:563px;width:204px;height:115px;border:1px solid;border-color:#808080 #fff #fff #808080;box-shadow:inset 1px 1px #fff,inset -1px -1px #808080"></div>
<div class="lbl" style="left:760px;top:557px;background:#d4d0c8;padding:0 3px">AT command Setup</div>
<div class="lbl" style="left:886px;top:568px">ASCII</div>
<div class="lbl" style="left:922px;top:568px">Hex</div>
<div class="lbl" style="left:758px;top:592px;letter-spacing:-.4px">Command Character (CC)</div>
<div class="sunk" style="left:884px;top:583px;width:27px;height:22px;text-align:center"><div style="line-height:17px">+</div></div>
<div class="sunk" style="left:920px;top:583px;width:27px;height:22px;text-align:center"><div style="line-height:17px">2B</div></div>
<div class="lbl" style="left:758px;top:629px">Guard Time Before (BT)</div>
<div class="sunk" style="left:883px;top:623px;width:65px;height:22px;text-align:center"><div style="line-height:17px">1000</div></div>
<!-- modem flash -->
<div class="a" style="left:754px;top:693px;width:204px;height:40px;border:1px solid;border-color:#808080 #fff #fff #808080;box-shadow:inset 1px 1px #fff,inset -1px -1px #808080"></div>
<div class="lbl" style="left:760px;top:686px;background:#d4d0c8;padding:0 3px">Modem Flash Update</div>
<div class="a" style="left:763px;top:707px;width:13px;height:13px;border:1px solid;border-color:#808080 #fff #fff #808080;box-shadow:inset 1px 1px #404040,inset -1px -1px #d4d0c8;background:#fff"></div>
<div class="lbl" style="left:781px;top:707px">No baud change</div>
<!-- status bar -->
<div class="a" style="left:743px;top:749px;width:49px;height:17px;border:1px solid;border-color:#808080 #fff #fff #808080"></div>
<div class="a" style="left:793px;top:749px;width:242px;height:17px;border:1px solid;border-color:#808080 #fff #fff #808080"></div>
<div class="a" style="left:1036px;top:749px;width:100px;height:17px;border:1px solid;border-color:#808080 #fff #fff #808080"></div>
<div class="a" style="left:1137px;top:749px;width:53px;height:17px;border:1px solid;border-color:#808080 #fff #fff #808080"></div>

<!-- DIALOG -->
<div class="a" style="left:465px;top:346px;width:351px;height:180px;background:#d4d0c8;border:1px solid;border-color:#d4d0c8 #404040 #404040 #d4d0c8;box-shadow:inset 1px 1px #fff,inset -1px -1px #808080"></div>
<div class="tb act" style="left:468px;top:349px;width:345px"></div>
<div class="lbl" style="left:470px;top:351px;color:#fff;font-weight:bold;font-family:'Liberation Mono',monospace;font-size:11.5px;line-height:14px;letter-spacing:0">Com test / Query Modem</div>
<div class="lbl" style="left:479px;top:376px">Communication with modem..OK</div>
<div class="lbl" style="left:479px;top:389px">Modem type = XB24</div>
<div class="lbl" style="left:479px;top:402px">Modem firmware version = 10EC</div>
<div class="lbl" style="left:479px;top:428px">Serial Number = 13A200408D37DB</div>
<div class="btn" style="left:650px;top:483px;width:75px;height:23px;line-height:19px">Retry</div>
<div class="btn" style="left:729px;top:483px;width:75px;height:23px;line-height:19px">OK</div>


<!-- TASKBAR -->
<div class="a" style="left:0;top:0;width:1280px;height:28px;background:#d4d0c8"></div>
<div class="btn" style="left:2px;top:2px;width:62px;height:22px"></div>
<svg class="a" style="left:4px;top:5px" width="18" height="17" viewBox="0 0 18 17"><path d="M1.5 2.5Q4.5 .5 8.5 2.5L7.5 8Q4 6 .5 8Z" fill="#f05a18"/><path d="M9.5 2.5Q12.5 4.5 16.5 2.5L15.5 8Q12 10 8.5 8Z" fill="#50b830"/><path d="M.5 9Q3.5 7 7.5 9L6.5 14.5Q3 12.5 -.5 14.5Z" fill="#2868e0"/><path d="M8.5 9Q11.5 11 15.5 9L14.5 14.5Q11 16.5 7.5 14.5Z" fill="#f8c018"/></svg>
<div class="btn" style="left:69px;top:2px;width:160px;height:22px"></div>
<svg class="a" style="left:73px;top:6px" width="16" height="14" viewBox="0 0 16 14"><path d="M1 3H6L7 1H13L14 3V13H1Z" fill="#e8c050" stroke="#a07820" stroke-width=".8"/><circle cx="6" cy="7" r="3.5" fill="#d8f0f8" stroke="#88b0c8" stroke-width=".8"/></svg>
<div class="lbl" style="left:93px;top:8px;font-size:12px">a</div>
<div class="btn" style="left:232px;top:2px;width:160px;height:22px"></div>
<svg class="a" style="left:236px;top:5px" width="16" height="16" viewBox="0 0 16 16"><path d="M2.5 .5H10.5L13.5 3.5V15.5H2.5Z" fill="#fff" stroke="#000"/><rect x="1" y="3" width="6" height="7" fill="#0a1a80"/><rect x="2" y="5" width="3" height="2" fill="#8fe"/></svg>
<div class="a" style="left:395px;top:2px;width:160px;height:22px;border:1px solid;border-color:#404040 #fff #fff #404040;box-shadow:inset 1px 1px #808080;background-color:#f0eee8;background-image:repeating-conic-gradient(#fff 0 25%,#d4d0c8 0 50%);background-size:2px 2px"></div>
<svg class="a" style="left:400px;top:5px" width="16" height="16" viewBox="0 0 16 16"><rect x="0" y="1" width="7" height="10" fill="#0a3a0a"/><rect x="2" y="3" width="3" height="3" fill="#b8e8b0"/><rect x="9" y="1" width="7" height="10" fill="#0a3a0a"/><rect x="10" y="3" width="5" height="4" fill="#8ef08e"/><path d="M2 14L4 12M11 14L13 12" stroke="#000" stroke-width="1.2"/><rect x="3" y="15" width="9" height="1" fill="#555"/></svg>
<div class="lbl" style="left:420px;top:8px;font-weight:bold;font-size:12px">X-CTU</div>
<!-- tray -->
<div class="a" style="left:1108px;top:6px;width:17px;height:16px;background:#0a246a;color:#fff;font-size:11px;line-height:16px;text-align:center">JP</div>
<div class="a" style="left:1128px;top:3px;width:2px;height:22px;border-left:1px solid #808080;border-right:1px solid #fff"></div>
<svg class="a" style="left:1135px;top:5px" width="18" height="18" viewBox="0 0 18 18"><circle cx="7" cy="7" r="6" fill="#e01010"/><circle cx="5" cy="5" r="2" fill="#ff9090"/><path d="M12 3V9" stroke="#c04000" stroke-width="1.5"/><path d="M8 12Q9 17 13 16Q16 14 14 10" stroke="#000" stroke-width="1.5" fill="#fff"/></svg>
<div class="lbl" style="left:1167px;top:7px;font-size:14px;line-height:14px">A</div>
<div class="a" style="left:1203px;top:2px;width:75px;height:25px;border:1px solid;border-color:#808080 #fff #fff #808080"></div>
<div class="lbl" style="left:1208px;top:7px;font-size:11px;font-weight:bold">&laquo;</div>
<svg class="a" style="left:1221px;top:6px" width="16" height="16" viewBox="0 0 16 16"><circle cx="7" cy="8" r="6" fill="#909090"/><circle cx="7" cy="8" r="4" fill="#c0c0c0"/><circle cx="6" cy="7" r="2" fill="#606060"/><path d="M12 13Q15 10 13 5" stroke="#8080c0" stroke-width="1" fill="none"/></svg>
<div class="lbl" style="left:1243px;top:8px;font-size:12px">11:51</div>

<!-- CJK TEXT -->
<div class="a" style="left:22px;top:6px;height:15px;display:flex;align-items:center;white-space:nowrap;color:#000;font-family:'Liberation Sans',sans-serif;font-size:11px;font-weight:normal;letter-spacing:0px;line-height:15px;"><svg width="9.6" height="15" viewBox="0 -1.20 9.22 14.40" style="flex:none;overflow:visible"><path d="M2 2.5H9.5Q8 7.5 1.5 11M6.5 7L10.5 11" stroke="#000" stroke-width="1.73" fill="none"/></svg><svg width="9.6" height="15" viewBox="0 -1.20 9.22 14.40" style="flex:none;overflow:visible"><path d="M5 1Q4 3.5 1.5 5.5M4.3 2.8H10Q8.5 9 3 11.5M3.8 5.8L8 8.3" stroke="#000" stroke-width="1.73" fill="none"/></svg><svg width="9.6" height="15" viewBox="0 -1.20 9.22 14.40" style="flex:none;overflow:visible"><path d="M1 6.5H11" stroke="#000" stroke-width="1.73" fill="none"/></svg><svg width="9.6" height="15" viewBox="0 -1.20 9.22 14.40" style="flex:none;overflow:visible"><path d="M4.5 1V11.5M4.5 5.2L9.5 7.8" stroke="#000" stroke-width="1.73" fill="none"/></svg></div>
<div class="a" style="left:256px;top:7px;height:13px;display:flex;align-items:center;white-space:nowrap;color:#000;font-family:'Liberation Sans',sans-serif;font-size:11px;font-weight:normal;letter-spacing:-0.3px;line-height:13px;"><span>C:¥...¥</span><svg width="9.0" height="13" viewBox="0 -1.80 10.80 15.60" style="flex:none;overflow:visible"><path d="M2.5 2.2H8.5M1 5.5H10.5M6 5.5Q6 10 3 11.5M9.6 .3L10.4 2M11.2 0L12 1.7" stroke="#000" stroke-width="1.20" fill="none"/></svg><svg width="9.0" height="13" viewBox="0 -1.80 10.80 15.60" style="flex:none;overflow:visible"><path d="M2 2.5H9.5Q8 7.5 1.5 11M6.5 7L10.5 11" stroke="#000" stroke-width="1.20" fill="none"/></svg><svg width="9.0" height="13" viewBox="0 -1.80 10.80 15.60" style="flex:none;overflow:visible"><path d="M5 1Q4 3.5 1.5 5.5M4.3 2.8H10Q8.5 9 3 11.5" stroke="#000" stroke-width="1.20" fill="none"/></svg><svg width="9.0" height="13" viewBox="0 -1.80 10.80 15.60" style="flex:none;overflow:visible"><path d="M4.5 1V11.5M4.5 5.2L9.5 7.8" stroke="#000" stroke-width="1.20" fill="none"/></svg><svg width="7.2" height="13" viewBox="1.5 -1.80 8.64 15.60" style="flex:none;overflow:visible"><path d="M2.8 6.2L3.6 8.3M5.4 5.6L6.2 7.7M9 5.5Q8.6 9.8 4.5 11.5" stroke="#000" stroke-width="1.20" fill="none"/></svg><svg width="9.0" height="13" viewBox="0 -1.80 10.80 15.60" style="flex:none;overflow:visible"><path d="M1.5 3H9.2Q8.6 8.5 4 11.5M10.6 1.6m-1.1 0a1.1 1.1 0 1 0 2.2 0a1.1 1.1 0 1 0-2.2 0" stroke="#000" stroke-width="1.20" fill="none"/></svg><span>¥XBee_m...</span></div>
<div class="a" style="left:319px;top:71px;height:14px;display:flex;align-items:center;white-space:nowrap;color:#d4d0c8;font-family:'Liberation Sans',sans-serif;font-size:12px;font-weight:bold;letter-spacing:0px;line-height:14px;"><span>C:¥...¥</span><svg width="10.0" height="14" viewBox="0 -1.64 10.91 15.27" style="flex:none;overflow:visible"><path d="M2.5 2.2H8.5M1 5.5H10.5M6 5.5Q6 10 3 11.5M9.6 .3L10.4 2M11.2 0L12 1.7" stroke="#d4d0c8" stroke-width="1.64" fill="none"/></svg><svg width="10.0" height="14" viewBox="0 -1.64 10.91 15.27" style="flex:none;overflow:visible"><path d="M2 2.5H9.5Q8 7.5 1.5 11M6.5 7L10.5 11" stroke="#d4d0c8" stroke-width="1.64" fill="none"/></svg><svg width="10.0" height="14" viewBox="0 -1.64 10.91 15.27" style="flex:none;overflow:visible"><path d="M5 1Q4 3.5 1.5 5.5M4.3 2.8H10Q8.5 9 3 11.5" stroke="#d4d0c8" stroke-width="1.64" fill="none"/></svg><svg width="10.0" height="14" viewBox="0 -1.64 10.91 15.27" style="flex:none;overflow:visible"><path d="M4.5 1V11.5M4.5 5.2L9.5 7.8" stroke="#d4d0c8" stroke-width="1.64" fill="none"/></svg><svg width="8.0" height="14" viewBox="1.5 -1.64 8.73 15.27" style="flex:none;overflow:visible"><path d="M2.8 6.2L3.6 8.3M5.4 5.6L6.2 7.7M9 5.5Q8.6 9.8 4.5 11.5" stroke="#d4d0c8" stroke-width="1.64" fill="none"/></svg><svg width="10.0" height="14" viewBox="0 -1.64 10.91 15.27" style="flex:none;overflow:visible"><path d="M1.5 3H9.2Q8.6 8.5 4 11.5M10.6 1.6m-1.1 0a1.1 1.1 0 1 0 2.2 0a1.1 1.1 0 1 0-2.2 0" stroke="#d4d0c8" stroke-width="1.64" fill="none"/></svg><span>¥XBee_memo.txt&nbsp;(</span><svg width="14.0" height="14" viewBox="0 -0.67 13.33 13.33" style="flex:none;overflow:visible"><path d="M1.5 1.5H10.5M3 3.5H9V8H3ZM3 5.8H9M6 1.5V8M3 8Q6 11 11 11.5M8.5 8.5Q6 11 1.5 11.5" stroke="#d4d0c8" stroke-width="1.43" fill="none"/></svg><svg width="14.0" height="14" viewBox="0 -0.67 13.33 13.33" style="flex:none;overflow:visible"><path d="M1 2.5H6M3.5 .8V2.5M1.5 4.5H6M1 6.5H6M3.5 6.5V11.5M3.5 8L1 10.5M3.5 8.5L6 10M11 1.5Q9 2.5 7.5 3M7.5 3V7Q7.5 10 6.5 11.5M7.5 6H11M9.5 6V11.5" stroke="#d4d0c8" stroke-width="1.43" fill="none"/></svg><span>)&nbsp;-&nbsp;</span><svg width="14.0" height="14" viewBox="0 -0.67 13.33 13.33" style="flex:none;overflow:visible"><path d="M10 1Q6 2.5 2 2.5M1 4.5H11M6 1.5V7M6 4.5L1.5 7M6 4.5L10.5 7M2.5 8H8Q8 11 6.5 11M5 8Q4.5 10.5 2 11.5M8 8.5Q9 10 11 11" stroke="#d4d0c8" stroke-width="1.43" fill="none"/></svg><svg width="14.0" height="14" viewBox="0 -0.67 13.33 13.33" style="flex:none;overflow:visible"><path d="M1 4H9Q9 10 10 10.5H11.5M5.5 1V5Q4.5 9.5 1.5 11.5M3 7L6 9" stroke="#d4d0c8" stroke-width="1.43" fill="none"/></svg></div>
<div class="a" style="left:305px;top:90px;height:13px;display:flex;align-items:center;white-space:nowrap;color:#666;font-family:'Liberation Sans',sans-serif;font-size:11px;font-weight:normal;letter-spacing:0px;line-height:13px;"><svg width="8.0" height="13" viewBox="0 -1.80 9.60 15.60" style="flex:none;overflow:visible"><path d="M2 3H10Q9 8.5 4 11.5" stroke="#666" stroke-width="1.20" fill="none"/></svg><svg width="6.4" height="13" viewBox="1.5 -1.80 7.68 15.60" style="flex:none;overflow:visible"><path d="M3 5H10Q9.5 7 7.5 8.3M6.5 7V11.5" stroke="#666" stroke-width="1.20" fill="none"/></svg><svg width="8.0" height="13" viewBox="0 -1.80 9.60 15.60" style="flex:none;overflow:visible"><path d="M10 1.5Q6.5 6 1.5 8.2M6.5 5V11.5" stroke="#666" stroke-width="1.20" fill="none"/></svg><svg width="8.0" height="13" viewBox="0 -1.80 9.60 15.60" style="flex:none;overflow:visible"><path d="M3.5 2V6Q3.5 10 1.5 11.5M7.2 1.5V10.8Q9 10.3 11 7" stroke="#666" stroke-width="1.20" fill="none"/></svg><span>(F)</span></div>
<div class="a" style="left:363px;top:90px;height:13px;display:flex;align-items:center;white-space:nowrap;color:#666;font-family:'Liberation Sans',sans-serif;font-size:11px;font-weight:normal;letter-spacing:0px;line-height:13px;"><svg width="12.0" height="13" viewBox="0 -1.22 13.33 14.44" style="flex:none;overflow:visible"><path d="M3.5 1L2 4L4.5 5.5M4.5 3L1.5 8H5.5M3.5 8V11.5M2 9.5L1 11M5 9.5L5.5 11M6.5 1.5H11M7 3H10.5V5H7ZM7 5V11.5M7 6.5H11V11.5M8.5 6.5V11.5M9.8 6.5V11.5M7 9H11" stroke="#666" stroke-width="1.11" fill="none"/></svg><svg width="12.0" height="13" viewBox="0 -1.22 13.33 14.44" style="flex:none;overflow:visible"><path d="M4 1L2 4M3.5 2.5V7M3.5 2.5H10M3.5 4.5H9M3.5 6.5H10M6.5 2.5V7M1 8H11M6 7V11.5M6 8.5L2 11M6 8.5L10 11" stroke="#666" stroke-width="1.11" fill="none"/></svg><span>(E)</span></div>
<div class="a" style="left:416px;top:90px;height:13px;display:flex;align-items:center;white-space:nowrap;color:#666;font-family:'Liberation Sans',sans-serif;font-size:11px;font-weight:normal;letter-spacing:0px;line-height:13px;"><svg width="12.0" height="13" viewBox="0 -1.22 13.33 14.44" style="flex:none;overflow:visible"><path d="M1 4H5M3 1V11.5M3 5L1 9M3 5.5L5 8M8.5 1L5.5 4M8.5 1L11.5 4M6.5 5H10.5V8H6.5ZM8.5 4V8M6 9.5H11M8.5 8L6 11.5M8.5 8L11.5 11.5" stroke="#666" stroke-width="1.11" fill="none"/></svg><svg width="12.0" height="13" viewBox="0 -1.22 13.33 14.44" style="flex:none;overflow:visible"><path d="M6 .5V2.5M2 2H10M1.5 3.5V5M10.5 3.5V5M1.5 3.5H10.5M6 4L4 6.5H8M8 5.5L3 9H9M6 9V11.5M3.5 10L2 11.5M8.5 10L10 11.5" stroke="#666" stroke-width="1.11" fill="none"/></svg><span>(S)</span></div>
<div class="a" style="left:468px;top:90px;height:13px;display:flex;align-items:center;white-space:nowrap;color:#666;font-family:'Liberation Sans',sans-serif;font-size:11px;font-weight:normal;letter-spacing:0px;line-height:13px;"><svg width="8.0" height="13" viewBox="0 -1.80 9.60 15.60" style="flex:none;overflow:visible"><path d="M6 .5V2.5M2 5.2V2.5H10V5Q9.5 9.5 4 11.5" stroke="#666" stroke-width="1.20" fill="none"/></svg><svg width="6.4" height="13" viewBox="1.5 -1.80 7.68 15.60" style="flex:none;overflow:visible"><path d="M9.5 5Q7 8 3 9.3M7 7.5V11.5" stroke="#666" stroke-width="1.20" fill="none"/></svg><svg width="8.0" height="13" viewBox="0 -1.80 9.60 15.60" style="flex:none;overflow:visible"><path d="M2 2.5L4.5 4.3M2 10.8Q8.5 9.5 10.5 3" stroke="#666" stroke-width="1.20" fill="none"/></svg><svg width="8.0" height="13" viewBox="0 -1.80 9.60 15.60" style="flex:none;overflow:visible"><path d="M4 1V11.5M4 5L8.5 7.3M8.8.3L9.6 2M10.6 0L11.4 1.7" stroke="#666" stroke-width="1.20" fill="none"/></svg><svg width="8.0" height="13" viewBox="0 -1.80 9.60 15.60" style="flex:none;overflow:visible"><path d="M6 .5V2.5M2 5.2V2.5H10V5Q9.5 9.5 4 11.5" stroke="#666" stroke-width="1.20" fill="none"/></svg><span>(W)</span></div>
<div class="a" style="left:537px;top:90px;height:13px;display:flex;align-items:center;white-space:nowrap;color:#666;font-family:'Liberation Sans',sans-serif;font-size:11px;font-weight:normal;letter-spacing:0px;line-height:13px;"><svg width="8.0" height="13" viewBox="0 -1.80 9.60 15.60" style="flex:none;overflow:visible"><path d="M1.5 2.5H10.5Q9 6 6 8.2M4.5 6.5L8.2 11" stroke="#666" stroke-width="1.20" fill="none"/></svg><svg width="8.0" height="13" viewBox="0 -1.80 9.60 15.60" style="flex:none;overflow:visible"><path d="M5 1Q4 3.5 1.5 5.5M4.3 2.8H10Q8.5 9 3 11.5" stroke="#666" stroke-width="1.20" fill="none"/></svg><svg width="8.0" height="13" viewBox="0 -1.80 9.60 15.60" style="flex:none;overflow:visible"><path d="M2.5 2.5V10.5H9.5V2.5Z" stroke="#666" stroke-width="1.20" fill="none"/></svg><span>(M)</span></div>
<div class="a" style="left:588px;top:90px;height:13px;display:flex;align-items:center;white-space:nowrap;color:#666;font-family:'Liberation Sans',sans-serif;font-size:11px;font-weight:normal;letter-spacing:0px;line-height:13px;"><svg width="9.0" height="13" viewBox="0 -1.80 10.80 15.60" style="flex:none;overflow:visible"><path d="M3 1.5H9L2 7H10.5Q6.5 7.8 6.5 11.5" stroke="#666" stroke-width="1.20" fill="none"/></svg><svg width="9.0" height="13" viewBox="0 -1.80 10.80 15.60" style="flex:none;overflow:visible"><path d="M6.2 2.8Q5.5 9 3 10Q1 9 1.8 6Q3.8 2.5 8 2.8Q11 4.5 10.5 8Q9.5 11 7 11.5" stroke="#666" stroke-width="1.20" fill="none"/></svg><svg width="12.0" height="13" viewBox="0 -1.22 13.33 14.44" style="flex:none;overflow:visible"><path d="M3 1L1 5M2.5 3.5V11.5M4.5 5V10Q4.5 11 6 11H11V9.5M4.5 6L11 4.5Q11 7.5 10 7.5M6.5 2V9M8.5 1.5V8" stroke="#666" stroke-width="1.11" fill="none"/></svg><span>(O)</span></div>
<div class="a" style="left:181px;top:232px;height:13px;display:flex;align-items:center;white-space:nowrap;color:#fff;font-family:'Liberation Sans',sans-serif;font-size:11px;font-weight:normal;letter-spacing:0px;line-height:13px;"><svg width="7.5" height="13" viewBox="0 -1.80 9.00 15.60" style="flex:none;overflow:visible"><path d="M1 4.5H11M4 1.5V7M8 1.5V6.5Q8 10 4 11.5" stroke="#000" stroke-width="1.20" fill="none" transform="translate(1.20 1.20)"/><path d="M1 4.5H11M4 1.5V7M8 1.5V6.5Q8 10 4 11.5" stroke="#fff" stroke-width="1.20" fill="none"/></svg><svg width="7.5" height="13" viewBox="0 -1.80 9.00 15.60" style="flex:none;overflow:visible"><path d="M1 6.5H11" stroke="#000" stroke-width="1.20" fill="none" transform="translate(1.20 1.20)"/><path d="M1 6.5H11" stroke="#fff" stroke-width="1.20" fill="none"/></svg><svg width="7.5" height="13" viewBox="0 -1.80 9.00 15.60" style="flex:none;overflow:visible"><path d="M2 4H10M1.5 7.5H10.5M5.3 1L7 11.5" stroke="#000" stroke-width="1.20" fill="none" transform="translate(1.20 1.20)"/><path d="M2 4H10M1.5 7.5H10.5M5.3 1L7 11.5" stroke="#fff" stroke-width="1.20" fill="none"/></svg><svg width="6.0" height="13" viewBox="1.5 -1.80 7.20 15.60" style="flex:none;overflow:visible"><path d="M2.8 6.2L3.6 8.3M5.4 5.6L6.2 7.7M9 5.5Q8.6 9.8 4.5 11.5" stroke="#000" stroke-width="1.20" fill="none" transform="translate(1.20 1.20)"/><path d="M2.8 6.2L3.6 8.3M5.4 5.6L6.2 7.7M9 5.5Q8.6 9.8 4.5 11.5" stroke="#fff" stroke-width="1.20" fill="none"/></svg><svg width="7.5" height="13" viewBox="0 -1.80 9.00 15.60" style="flex:none;overflow:visible"><path d="M4.5 1V11.5M4.5 5.2L9.5 7.8" stroke="#000" stroke-width="1.20" fill="none" transform="translate(1.20 1.20)"/><path d="M4.5 1V11.5M4.5 5.2L9.5 7.8" stroke="#fff" stroke-width="1.20" fill="none"/></svg></div>
<div class="a" style="left:165px;top:460px;height:13px;display:flex;align-items:center;white-space:nowrap;color:#fff;font-family:'Liberation Sans',sans-serif;font-size:11px;font-weight:normal;letter-spacing:0px;line-height:13px;text-shadow:1px 1px 1px #000"><svg width="9.0" height="13" viewBox="0 -1.80 10.80 15.60" style="flex:none;overflow:visible"><path d="M1 7L4 3.5L11 10" stroke="#000" stroke-width="1.20" fill="none" transform="translate(1.20 1.20)"/><path d="M1 7L4 3.5L11 10" stroke="#fff" stroke-width="1.20" fill="none"/></svg><svg width="9.0" height="13" viewBox="0 -1.80 10.80 15.60" style="flex:none;overflow:visible"><path d="M6.2 2.8Q5.5 9 3 10Q1 9 1.8 6Q3.8 2.5 8 2.8Q11 4.5 10.5 8Q9.5 11 7 11.5" stroke="#000" stroke-width="1.20" fill="none" transform="translate(1.20 1.20)"/><path d="M6.2 2.8Q5.5 9 3 10Q1 9 1.8 6Q3.8 2.5 8 2.8Q11 4.5 10.5 8Q9.5 11 7 11.5" stroke="#fff" stroke-width="1.20" fill="none"/></svg><svg width="9.0" height="13" viewBox="0 -1.80 10.80 15.60" style="flex:none;overflow:visible"><path d="M2.5 2L4 3.5M1.5 5L3 6.5M2 11Q8 9 10.5 3" stroke="#000" stroke-width="1.20" fill="none" transform="translate(1.20 1.20)"/><path d="M2.5 2L4 3.5M1.5 5L3 6.5M2 11Q8 9 10.5 3" stroke="#fff" stroke-width="1.20" fill="none"/></svg><svg width="7.2" height="13" viewBox="1.5 -1.80 8.64 15.60" style="flex:none;overflow:visible"><path d="M3 5.5H9V11.5H3M3.5 8.5H9" stroke="#000" stroke-width="1.20" fill="none" transform="translate(1.20 1.20)"/><path d="M3 5.5H9V11.5H3M3.5 8.5H9" stroke="#fff" stroke-width="1.20" fill="none"/></svg><svg width="9.0" height="13" viewBox="0 -1.80 10.80 15.60" style="flex:none;overflow:visible"><path d="M1 6.5H11" stroke="#000" stroke-width="1.20" fill="none" transform="translate(1.20 1.20)"/><path d="M1 6.5H11" stroke="#fff" stroke-width="1.20" fill="none"/></svg><svg width="9.0" height="13" viewBox="0 -1.80 10.80 15.60" style="flex:none;overflow:visible"><path d="M4.5 1V11.5M4.5 5.2L9.5 7.8" stroke="#000" stroke-width="1.20" fill="none" transform="translate(1.20 1.20)"/><path d="M4.5 1V11.5M4.5 5.2L9.5 7.8" stroke="#fff" stroke-width="1.20" fill="none"/></svg><svg width="9.0" height="13" viewBox="0 -1.80 10.80 15.60" style="flex:none;overflow:visible"><path d="M1.5 3.5H10Q10 11 8 11M5.5 1Q5.5 8 2 11.5" stroke="#000" stroke-width="1.20" fill="none" transform="translate(1.20 1.20)"/><path d="M1.5 3.5H10Q10 11 8 11M5.5 1Q5.5 8 2 11.5" stroke="#fff" stroke-width="1.20" fill="none"/></svg><span>...</span></div>
<div class="a" style="left:1180px;top:6px;height:16px;display:flex;align-items:center;white-space:nowrap;color:#000;font-family:'Liberation Sans',sans-serif;font-size:11px;font-weight:normal;letter-spacing:0px;line-height:16px;"><svg width="16.0" height="16" viewBox="0 -0.67 13.33 13.33" style="flex:none;overflow:visible"><path d="M2.5 1L3 2.5M2 2.5H5.5V10Q5.5 11.5 4.5 11.5M2 2.5V8Q2 10 1 11.5M2.5 5L3.5 6M1 7.5H6.5M7.5 1.5V4Q7.5 5 6.5 5.5M7.5 1.5H9.5V4Q9.5 5 11 5M7 6.5H10.5Q9.5 10 6.5 11.5M7.5 7.5Q9 10.5 11.5 11.5" stroke="#000" stroke-width="0.92" fill="none"/></svg></div>

</body></html>
